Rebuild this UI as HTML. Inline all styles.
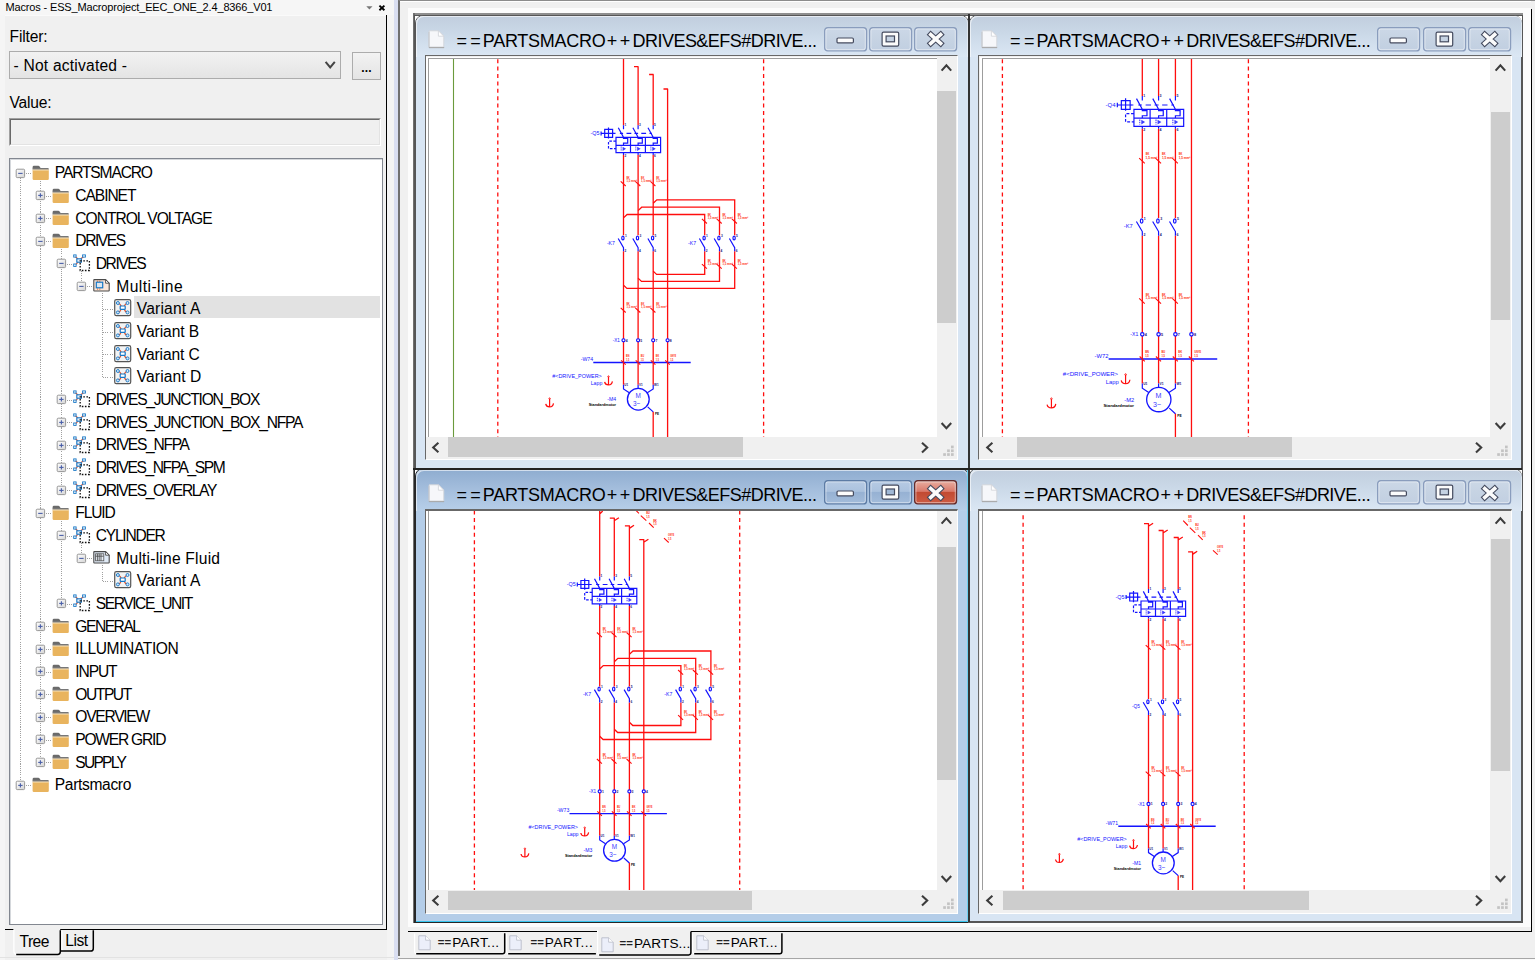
<!DOCTYPE html>
<html><head><meta charset="utf-8"><title>Macros</title>
<style>
html,body{margin:0;padding:0;}
body{width:1535px;height:960px;overflow:hidden;background:#f0f0f0;position:relative;font-family:"Liberation Sans",sans-serif;}
.t{position:absolute;white-space:nowrap;}
.a{position:absolute;}
svg{position:absolute;overflow:visible;}
</style></head><body>

<!-- left panel -->
<div class="a" style="left:0.00px;top:0.00px;width:394.00px;height:15.00px;background:#f6f6f6;"></div>
<div class="a" style="left:0.00px;top:15.00px;width:5.00px;height:945.00px;background:#f5f5f5;"></div>
<div class="a" style="left:5.00px;top:15.00px;width:381.00px;height:1.00px;background:#fafafa;"></div>
<div class="a" style="left:387.30px;top:15.00px;width:6.70px;height:945.00px;background:#f4f4f4;"></div>
<span id="t1" class="t" style="left:5.50px;top:1.69px;font-size:11.00px;line-height:11.00px;color:#000;font-family:'Liberation Sans', sans-serif;letter-spacing:-0.154px;">Macros - ESS_Macroproject_EEC_ONE_2.4_8366_V01</span>
<svg style="left:366px;top:2px" width="24" height="12"><path d="M0.3 4.2h6.2l-3.1 3.3z" fill="#777"/><path d="M13.4 3.6l5 4.6M18.4 3.6l-5 4.6" stroke="#000" stroke-width="1.9" fill="none"/></svg>
<div class="a" style="left:386.00px;top:15.00px;width:1.30px;height:915.00px;background:#000;"></div>
<div class="a" style="left:5.00px;top:929.00px;width:382.00px;height:1.20px;background:#000;"></div>
<div class="a" style="left:394.00px;top:0.00px;width:3.50px;height:960.00px;background:#d9def1;"></div>
<span id="t2" class="t" style="left:9.60px;top:28.59px;font-size:15.60px;line-height:15.60px;color:#000;font-family:'Liberation Sans', sans-serif;letter-spacing:-0.164px;">Filter:</span>
<div class="a" style="left:9.00px;top:50.50px;width:331.60px;height:28.00px;box-sizing:border-box;border:1px solid #acacac;background:linear-gradient(#f2f2f2,#e4e4e4);"></div>
<span id="t3" class="t" style="left:13.50px;top:57.79px;font-size:15.60px;line-height:15.60px;color:#000;font-family:'Liberation Sans', sans-serif;letter-spacing:0.215px;">- Not activated -</span>
<svg style="left:323px;top:60px" width="14" height="11"><path d="M2.6 1.8l4.6 5.6 4.6-5.6" stroke="#444" stroke-width="2" fill="none"/></svg>
<div class="a" style="left:352.00px;top:51.50px;width:29.00px;height:28.00px;box-sizing:border-box;border:1px solid #acacac;background:linear-gradient(#f2f2f2,#e4e4e4);"></div>
<span id="t4" class="t" style="left:361.20px;top:62.04px;font-size:12.00px;line-height:12.00px;color:#000;font-family:'Liberation Sans', sans-serif;font-weight:bold;letter-spacing:0.2px;">...</span>
<span id="t5" class="t" style="left:9.60px;top:95.39px;font-size:15.60px;line-height:15.60px;color:#000;font-family:'Liberation Sans', sans-serif;letter-spacing:-0.212px;">Value:</span>
<div class="a" style="left:9.00px;top:117.50px;width:371.50px;height:28.50px;box-sizing:border-box;border:1px solid #fff;border-top-color:#a0a0a0;border-left-color:#a0a0a0;background:#f0f0f0;"></div>
<div class="a" style="left:10.00px;top:118.50px;width:369.50px;height:26.50px;box-sizing:border-box;border:1px solid #e3e3e3;border-top-color:#696969;border-left-color:#696969;"></div>
<div class="a" style="left:9.00px;top:157.80px;width:373.50px;height:767.00px;box-sizing:border-box;border:1px solid #828790;background:#fff;"></div>
<div class="a" style="left:10.00px;top:158.80px;width:371.50px;height:765.00px;box-sizing:border-box;border:1px solid #d5d8dc;border-right:none;border-bottom:none;"></div>
<!-- tree -->
<div class="a" style="left:134.20px;top:295.90px;width:246.00px;height:22.30px;background:#e2e2e2;"></div>
<div class="a" style="left:19.70px;top:177.80px;width:1px;height:602.01px;background:repeating-linear-gradient(#a0a0a0 0 0.9px,transparent 0.9px 1.85px);"></div>
<div class="a" style="left:40.20px;top:180.80px;width:1px;height:576.34px;background:repeating-linear-gradient(#a0a0a0 0 0.9px,transparent 0.9px 1.85px);"></div>
<div class="a" style="left:60.70px;top:248.80px;width:1px;height:236.34px;background:repeating-linear-gradient(#a0a0a0 0 0.9px,transparent 0.9px 1.85px);"></div>
<div class="a" style="left:81.20px;top:271.47px;width:1px;height:9.67px;background:repeating-linear-gradient(#a0a0a0 0 0.9px,transparent 0.9px 1.85px);"></div>
<div class="a" style="left:101.70px;top:293.13px;width:1px;height:83.67px;background:repeating-linear-gradient(#a0a0a0 0 0.9px,transparent 0.9px 1.85px);"></div>
<div class="a" style="left:60.70px;top:520.81px;width:1px;height:77.67px;background:repeating-linear-gradient(#a0a0a0 0 0.9px,transparent 0.9px 1.85px);"></div>
<div class="a" style="left:81.20px;top:543.47px;width:1px;height:9.67px;background:repeating-linear-gradient(#a0a0a0 0 0.9px,transparent 0.9px 1.85px);"></div>
<div class="a" style="left:101.70px;top:565.14px;width:1px;height:15.67px;background:repeating-linear-gradient(#a0a0a0 0 0.9px,transparent 0.9px 1.85px);"></div>
<div class="a" style="left:25.70px;top:173.00px;height:1px;width:5.70px;background:repeating-linear-gradient(90deg,#a0a0a0 0 0.9px,transparent 0.9px 1.85px);"></div>
<svg style="left:14.80px;top:167.70px" width="11" height="11" viewBox="0 0 11 11"><defs><linearGradient id="eg" x1="0" y1="0" x2="1" y2="1"><stop offset="0" stop-color="#fff"/><stop offset="1" stop-color="#d4d4d4"/></linearGradient></defs><rect x="1.2" y="1.2" width="8.4" height="8.4" rx="1" fill="url(#eg)" stroke="#979797" stroke-width="1"/><path d="M3.2 5.4h4.4" stroke="#4a5fa8" stroke-width="1.1"/></svg>
<svg style="left:31.80px;top:165.00px" width="18" height="16" viewBox="0 0 18 16"><path d="M0.6 4.2V2.2Q0.6 0.8 2 0.8H6.2Q7.2 0.8 7.8 1.8L8.6 3H16.4V4.6z" fill="#6b6b6b"/><path d="M0.6 3.4H7.2" stroke="#555" stroke-width="0"/><rect x="0.6" y="4.3" width="16.2" height="10.6" rx="1.2" fill="#e9b45e"/><rect x="0.6" y="4.3" width="16.2" height="1.2" fill="#f6e3c0"/><rect x="0.6" y="3.6" width="16.2" height="0.9" fill="#8a8a8a"/></svg>
<span id="t6" class="t" style="left:54.80px;top:165.19px;font-size:15.60px;line-height:15.60px;color:#000;font-family:'Liberation Sans', sans-serif;letter-spacing:-1.155px;">PARTSMACRO</span>
<div class="a" style="left:46.20px;top:195.67px;height:1px;width:5.70px;background:repeating-linear-gradient(90deg,#a0a0a0 0 0.9px,transparent 0.9px 1.85px);"></div>
<svg style="left:35.30px;top:190.37px" width="11" height="11" viewBox="0 0 11 11"><defs><linearGradient id="eg" x1="0" y1="0" x2="1" y2="1"><stop offset="0" stop-color="#fff"/><stop offset="1" stop-color="#d4d4d4"/></linearGradient></defs><rect x="1.2" y="1.2" width="8.4" height="8.4" rx="1" fill="url(#eg)" stroke="#979797" stroke-width="1"/><path d="M3.2 5.4h4.4" stroke="#4a5fa8" stroke-width="1.1"/><path d="M5.4 3.2v4.4" stroke="#4a5fa8" stroke-width="1.1"/></svg>
<svg style="left:52.30px;top:187.67px" width="18" height="16" viewBox="0 0 18 16"><path d="M0.6 4.2V2.2Q0.6 0.8 2 0.8H6.2Q7.2 0.8 7.8 1.8L8.6 3H16.4V4.6z" fill="#6b6b6b"/><path d="M0.6 3.4H7.2" stroke="#555" stroke-width="0"/><rect x="0.6" y="4.3" width="16.2" height="10.6" rx="1.2" fill="#e9b45e"/><rect x="0.6" y="4.3" width="16.2" height="1.2" fill="#f6e3c0"/><rect x="0.6" y="3.6" width="16.2" height="0.9" fill="#8a8a8a"/></svg>
<span id="t7" class="t" style="left:75.30px;top:187.86px;font-size:15.60px;line-height:15.60px;color:#000;font-family:'Liberation Sans', sans-serif;letter-spacing:-1.066px;">CABINET</span>
<div class="a" style="left:46.20px;top:218.33px;height:1px;width:5.70px;background:repeating-linear-gradient(90deg,#a0a0a0 0 0.9px,transparent 0.9px 1.85px);"></div>
<svg style="left:35.30px;top:213.03px" width="11" height="11" viewBox="0 0 11 11"><defs><linearGradient id="eg" x1="0" y1="0" x2="1" y2="1"><stop offset="0" stop-color="#fff"/><stop offset="1" stop-color="#d4d4d4"/></linearGradient></defs><rect x="1.2" y="1.2" width="8.4" height="8.4" rx="1" fill="url(#eg)" stroke="#979797" stroke-width="1"/><path d="M3.2 5.4h4.4" stroke="#4a5fa8" stroke-width="1.1"/><path d="M5.4 3.2v4.4" stroke="#4a5fa8" stroke-width="1.1"/></svg>
<svg style="left:52.30px;top:210.33px" width="18" height="16" viewBox="0 0 18 16"><path d="M0.6 4.2V2.2Q0.6 0.8 2 0.8H6.2Q7.2 0.8 7.8 1.8L8.6 3H16.4V4.6z" fill="#6b6b6b"/><path d="M0.6 3.4H7.2" stroke="#555" stroke-width="0"/><rect x="0.6" y="4.3" width="16.2" height="10.6" rx="1.2" fill="#e9b45e"/><rect x="0.6" y="4.3" width="16.2" height="1.2" fill="#f6e3c0"/><rect x="0.6" y="3.6" width="16.2" height="0.9" fill="#8a8a8a"/></svg>
<span id="t8" class="t" style="left:75.30px;top:210.53px;font-size:15.60px;line-height:15.60px;color:#000;font-family:'Liberation Sans', sans-serif;letter-spacing:-1.003px;">CONTROL VOLTAGE</span>
<div class="a" style="left:46.20px;top:241.00px;height:1px;width:5.70px;background:repeating-linear-gradient(90deg,#a0a0a0 0 0.9px,transparent 0.9px 1.85px);"></div>
<svg style="left:35.30px;top:235.70px" width="11" height="11" viewBox="0 0 11 11"><defs><linearGradient id="eg" x1="0" y1="0" x2="1" y2="1"><stop offset="0" stop-color="#fff"/><stop offset="1" stop-color="#d4d4d4"/></linearGradient></defs><rect x="1.2" y="1.2" width="8.4" height="8.4" rx="1" fill="url(#eg)" stroke="#979797" stroke-width="1"/><path d="M3.2 5.4h4.4" stroke="#4a5fa8" stroke-width="1.1"/></svg>
<svg style="left:52.30px;top:233.00px" width="18" height="16" viewBox="0 0 18 16"><path d="M0.6 4.2V2.2Q0.6 0.8 2 0.8H6.2Q7.2 0.8 7.8 1.8L8.6 3H16.4V4.6z" fill="#6b6b6b"/><path d="M0.6 3.4H7.2" stroke="#555" stroke-width="0"/><rect x="0.6" y="4.3" width="16.2" height="10.6" rx="1.2" fill="#e9b45e"/><rect x="0.6" y="4.3" width="16.2" height="1.2" fill="#f6e3c0"/><rect x="0.6" y="3.6" width="16.2" height="0.9" fill="#8a8a8a"/></svg>
<span id="t9" class="t" style="left:75.30px;top:233.20px;font-size:15.60px;line-height:15.60px;color:#000;font-family:'Liberation Sans', sans-serif;letter-spacing:-1.433px;">DRIVES</span>
<div class="a" style="left:66.70px;top:263.67px;height:1px;width:5.70px;background:repeating-linear-gradient(90deg,#a0a0a0 0 0.9px,transparent 0.9px 1.85px);"></div>
<svg style="left:55.80px;top:258.37px" width="11" height="11" viewBox="0 0 11 11"><defs><linearGradient id="eg" x1="0" y1="0" x2="1" y2="1"><stop offset="0" stop-color="#fff"/><stop offset="1" stop-color="#d4d4d4"/></linearGradient></defs><rect x="1.2" y="1.2" width="8.4" height="8.4" rx="1" fill="url(#eg)" stroke="#979797" stroke-width="1"/><path d="M3.2 5.4h4.4" stroke="#4a5fa8" stroke-width="1.1"/></svg>
<svg style="left:73.10px;top:254.17px" width="18" height="18" viewBox="0 0 18 18"><path d="M2 2.3L5 5M11 2.3L7.6 5M2 11.5L5 8.2" stroke="#e0532e" stroke-width="1.1" fill="none"/><rect x="0.7" y="0.9" width="2.4" height="2.2" fill="#fff" stroke="#1476c6" stroke-width="0.9"/><rect x="9.6" y="0.9" width="2.8" height="2.2" fill="#fff" stroke="#1476c6" stroke-width="0.9"/><rect x="0.7" y="10" width="2.4" height="2.4" fill="#fff" stroke="#1476c6" stroke-width="0.9"/><rect x="3.8" y="4.8" width="4.6" height="3.4" fill="#e6eef8" stroke="#1476c6" stroke-width="1.1"/><rect x="7.2" y="6.9" width="9.2" height="9.6" fill="none" stroke="#111" stroke-width="1.3" stroke-dasharray="1.6 1.5"/></svg>
<span id="t10" class="t" style="left:95.80px;top:255.86px;font-size:15.60px;line-height:15.60px;color:#000;font-family:'Liberation Sans', sans-serif;letter-spacing:-1.453px;">DRIVES</span>
<div class="a" style="left:87.20px;top:286.33px;height:1px;width:5.70px;background:repeating-linear-gradient(90deg,#a0a0a0 0 0.9px,transparent 0.9px 1.85px);"></div>
<svg style="left:76.30px;top:281.03px" width="11" height="11" viewBox="0 0 11 11"><defs><linearGradient id="eg" x1="0" y1="0" x2="1" y2="1"><stop offset="0" stop-color="#fff"/><stop offset="1" stop-color="#d4d4d4"/></linearGradient></defs><rect x="1.2" y="1.2" width="8.4" height="8.4" rx="1" fill="url(#eg)" stroke="#979797" stroke-width="1"/><path d="M3.2 5.4h4.4" stroke="#4a5fa8" stroke-width="1.1"/></svg>
<svg style="left:93.30px;top:278.74px" width="18" height="14" viewBox="0 0 18 14"><path d="M1.4 0.6H12.6L16.2 4.2V11.4Q16.2 12 15.6 12H1.4Q0.8 12 0.8 11.4V1.2Q0.8 0.6 1.4 0.6z" fill="#fbe6d9" stroke="#4a4a4a" stroke-width="1.1"/><path d="M12.6 0.6V4.2H16.2z" fill="#fff" stroke="#4a4a4a" stroke-width="0.9"/><path d="M4.6 1.6v1.4M6.8 1.6v1.4M4.6 9.4v1.4M6.8 9.4v1.4" stroke="#f26b21" stroke-width="0.9"/><rect x="3.3" y="3.2" width="6.4" height="5.6" fill="#dbe6ef" stroke="#1476c6" stroke-width="1.2"/></svg>
<span id="t11" class="t" style="left:116.30px;top:278.53px;font-size:15.60px;line-height:15.60px;color:#000;font-family:'Liberation Sans', sans-serif;letter-spacing:0.434px;">Multi-line</span>
<div class="a" style="left:103.20px;top:309.00px;height:1px;width:10.20px;background:repeating-linear-gradient(90deg,#a0a0a0 0 0.9px,transparent 0.9px 1.85px);"></div>
<svg style="left:114.00px;top:299.40px" width="18" height="18" viewBox="0 0 18 18"><rect x="0.7" y="0.7" width="16" height="16" rx="1.6" fill="#f3f3f3" stroke="#555" stroke-width="1.2"/><path d="M4 4Q6.5 5 7.2 7.2M13.4 4Q11 5 10.2 7.2M4 13.4Q6.5 12.6 7.2 10.2M13.4 13.4Q11 12.6 10.2 10.2" stroke="#e0532e" stroke-width="1.2" fill="none"/><circle cx="3.9" cy="4" r="1.5" fill="#cfe6f8" stroke="#1476c6" stroke-width="0.9"/><circle cx="13.5" cy="4" r="1.5" fill="#cfe6f8" stroke="#1476c6" stroke-width="0.9"/><circle cx="3.9" cy="13.4" r="1.5" fill="#cfe6f8" stroke="#1476c6" stroke-width="0.9"/><circle cx="13.5" cy="13.4" r="1.5" fill="#cfe6f8" stroke="#1476c6" stroke-width="0.9"/><rect x="6.2" y="7" width="5" height="3.4" rx="0.6" fill="#fff" stroke="#1476c6" stroke-width="1.2"/></svg>
<span id="t12" class="t" style="left:136.80px;top:301.20px;font-size:15.60px;line-height:15.60px;color:#000;font-family:'Liberation Sans', sans-serif;letter-spacing:0.184px;">Variant A</span>
<div class="a" style="left:103.20px;top:331.67px;height:1px;width:10.20px;background:repeating-linear-gradient(90deg,#a0a0a0 0 0.9px,transparent 0.9px 1.85px);"></div>
<svg style="left:114.00px;top:322.07px" width="18" height="18" viewBox="0 0 18 18"><rect x="0.7" y="0.7" width="16" height="16" rx="1.6" fill="#f3f3f3" stroke="#555" stroke-width="1.2"/><path d="M4 4Q6.5 5 7.2 7.2M13.4 4Q11 5 10.2 7.2M4 13.4Q6.5 12.6 7.2 10.2M13.4 13.4Q11 12.6 10.2 10.2" stroke="#e0532e" stroke-width="1.2" fill="none"/><circle cx="3.9" cy="4" r="1.5" fill="#cfe6f8" stroke="#1476c6" stroke-width="0.9"/><circle cx="13.5" cy="4" r="1.5" fill="#cfe6f8" stroke="#1476c6" stroke-width="0.9"/><circle cx="3.9" cy="13.4" r="1.5" fill="#cfe6f8" stroke="#1476c6" stroke-width="0.9"/><circle cx="13.5" cy="13.4" r="1.5" fill="#cfe6f8" stroke="#1476c6" stroke-width="0.9"/><rect x="6.2" y="7" width="5" height="3.4" rx="0.6" fill="#fff" stroke="#1476c6" stroke-width="1.2"/></svg>
<span id="t13" class="t" style="left:136.80px;top:323.86px;font-size:15.60px;line-height:15.60px;color:#000;font-family:'Liberation Sans', sans-serif;letter-spacing:-0.073px;">Variant B</span>
<div class="a" style="left:103.20px;top:354.34px;height:1px;width:10.20px;background:repeating-linear-gradient(90deg,#a0a0a0 0 0.9px,transparent 0.9px 1.85px);"></div>
<svg style="left:114.00px;top:344.74px" width="18" height="18" viewBox="0 0 18 18"><rect x="0.7" y="0.7" width="16" height="16" rx="1.6" fill="#f3f3f3" stroke="#555" stroke-width="1.2"/><path d="M4 4Q6.5 5 7.2 7.2M13.4 4Q11 5 10.2 7.2M4 13.4Q6.5 12.6 7.2 10.2M13.4 13.4Q11 12.6 10.2 10.2" stroke="#e0532e" stroke-width="1.2" fill="none"/><circle cx="3.9" cy="4" r="1.5" fill="#cfe6f8" stroke="#1476c6" stroke-width="0.9"/><circle cx="13.5" cy="4" r="1.5" fill="#cfe6f8" stroke="#1476c6" stroke-width="0.9"/><circle cx="3.9" cy="13.4" r="1.5" fill="#cfe6f8" stroke="#1476c6" stroke-width="0.9"/><circle cx="13.5" cy="13.4" r="1.5" fill="#cfe6f8" stroke="#1476c6" stroke-width="0.9"/><rect x="6.2" y="7" width="5" height="3.4" rx="0.6" fill="#fff" stroke="#1476c6" stroke-width="1.2"/></svg>
<span id="t14" class="t" style="left:136.80px;top:346.53px;font-size:15.60px;line-height:15.60px;color:#000;font-family:'Liberation Sans', sans-serif;letter-spacing:-0.120px;">Variant C</span>
<div class="a" style="left:103.20px;top:377.00px;height:1px;width:10.20px;background:repeating-linear-gradient(90deg,#a0a0a0 0 0.9px,transparent 0.9px 1.85px);"></div>
<svg style="left:114.00px;top:367.40px" width="18" height="18" viewBox="0 0 18 18"><rect x="0.7" y="0.7" width="16" height="16" rx="1.6" fill="#f3f3f3" stroke="#555" stroke-width="1.2"/><path d="M4 4Q6.5 5 7.2 7.2M13.4 4Q11 5 10.2 7.2M4 13.4Q6.5 12.6 7.2 10.2M13.4 13.4Q11 12.6 10.2 10.2" stroke="#e0532e" stroke-width="1.2" fill="none"/><circle cx="3.9" cy="4" r="1.5" fill="#cfe6f8" stroke="#1476c6" stroke-width="0.9"/><circle cx="13.5" cy="4" r="1.5" fill="#cfe6f8" stroke="#1476c6" stroke-width="0.9"/><circle cx="3.9" cy="13.4" r="1.5" fill="#cfe6f8" stroke="#1476c6" stroke-width="0.9"/><circle cx="13.5" cy="13.4" r="1.5" fill="#cfe6f8" stroke="#1476c6" stroke-width="0.9"/><rect x="6.2" y="7" width="5" height="3.4" rx="0.6" fill="#fff" stroke="#1476c6" stroke-width="1.2"/></svg>
<span id="t15" class="t" style="left:136.80px;top:369.20px;font-size:15.60px;line-height:15.60px;color:#000;font-family:'Liberation Sans', sans-serif;letter-spacing:0.080px;">Variant D</span>
<div class="a" style="left:66.70px;top:399.67px;height:1px;width:5.70px;background:repeating-linear-gradient(90deg,#a0a0a0 0 0.9px,transparent 0.9px 1.85px);"></div>
<svg style="left:55.80px;top:394.37px" width="11" height="11" viewBox="0 0 11 11"><defs><linearGradient id="eg" x1="0" y1="0" x2="1" y2="1"><stop offset="0" stop-color="#fff"/><stop offset="1" stop-color="#d4d4d4"/></linearGradient></defs><rect x="1.2" y="1.2" width="8.4" height="8.4" rx="1" fill="url(#eg)" stroke="#979797" stroke-width="1"/><path d="M3.2 5.4h4.4" stroke="#4a5fa8" stroke-width="1.1"/><path d="M5.4 3.2v4.4" stroke="#4a5fa8" stroke-width="1.1"/></svg>
<svg style="left:73.10px;top:390.17px" width="18" height="18" viewBox="0 0 18 18"><path d="M2 2.3L5 5M11 2.3L7.6 5M2 11.5L5 8.2" stroke="#e0532e" stroke-width="1.1" fill="none"/><rect x="0.7" y="0.9" width="2.4" height="2.2" fill="#fff" stroke="#1476c6" stroke-width="0.9"/><rect x="9.6" y="0.9" width="2.8" height="2.2" fill="#fff" stroke="#1476c6" stroke-width="0.9"/><rect x="0.7" y="10" width="2.4" height="2.4" fill="#fff" stroke="#1476c6" stroke-width="0.9"/><rect x="3.8" y="4.8" width="4.6" height="3.4" fill="#e6eef8" stroke="#1476c6" stroke-width="1.1"/><rect x="7.2" y="6.9" width="9.2" height="9.6" fill="none" stroke="#111" stroke-width="1.3" stroke-dasharray="1.6 1.5"/></svg>
<span id="t16" class="t" style="left:95.80px;top:391.86px;font-size:15.60px;line-height:15.60px;color:#000;font-family:'Liberation Sans', sans-serif;letter-spacing:-1.254px;">DRIVES_JUNCTION_BOX</span>
<div class="a" style="left:66.70px;top:422.34px;height:1px;width:5.70px;background:repeating-linear-gradient(90deg,#a0a0a0 0 0.9px,transparent 0.9px 1.85px);"></div>
<svg style="left:55.80px;top:417.04px" width="11" height="11" viewBox="0 0 11 11"><defs><linearGradient id="eg" x1="0" y1="0" x2="1" y2="1"><stop offset="0" stop-color="#fff"/><stop offset="1" stop-color="#d4d4d4"/></linearGradient></defs><rect x="1.2" y="1.2" width="8.4" height="8.4" rx="1" fill="url(#eg)" stroke="#979797" stroke-width="1"/><path d="M3.2 5.4h4.4" stroke="#4a5fa8" stroke-width="1.1"/><path d="M5.4 3.2v4.4" stroke="#4a5fa8" stroke-width="1.1"/></svg>
<svg style="left:73.10px;top:412.84px" width="18" height="18" viewBox="0 0 18 18"><path d="M2 2.3L5 5M11 2.3L7.6 5M2 11.5L5 8.2" stroke="#e0532e" stroke-width="1.1" fill="none"/><rect x="0.7" y="0.9" width="2.4" height="2.2" fill="#fff" stroke="#1476c6" stroke-width="0.9"/><rect x="9.6" y="0.9" width="2.8" height="2.2" fill="#fff" stroke="#1476c6" stroke-width="0.9"/><rect x="0.7" y="10" width="2.4" height="2.4" fill="#fff" stroke="#1476c6" stroke-width="0.9"/><rect x="3.8" y="4.8" width="4.6" height="3.4" fill="#e6eef8" stroke="#1476c6" stroke-width="1.1"/><rect x="7.2" y="6.9" width="9.2" height="9.6" fill="none" stroke="#111" stroke-width="1.3" stroke-dasharray="1.6 1.5"/></svg>
<span id="t17" class="t" style="left:95.80px;top:414.53px;font-size:15.60px;line-height:15.60px;color:#000;font-family:'Liberation Sans', sans-serif;letter-spacing:-1.247px;">DRIVES_JUNCTION_BOX_NFPA</span>
<div class="a" style="left:66.70px;top:445.00px;height:1px;width:5.70px;background:repeating-linear-gradient(90deg,#a0a0a0 0 0.9px,transparent 0.9px 1.85px);"></div>
<svg style="left:55.80px;top:439.70px" width="11" height="11" viewBox="0 0 11 11"><defs><linearGradient id="eg" x1="0" y1="0" x2="1" y2="1"><stop offset="0" stop-color="#fff"/><stop offset="1" stop-color="#d4d4d4"/></linearGradient></defs><rect x="1.2" y="1.2" width="8.4" height="8.4" rx="1" fill="url(#eg)" stroke="#979797" stroke-width="1"/><path d="M3.2 5.4h4.4" stroke="#4a5fa8" stroke-width="1.1"/><path d="M5.4 3.2v4.4" stroke="#4a5fa8" stroke-width="1.1"/></svg>
<svg style="left:73.10px;top:435.50px" width="18" height="18" viewBox="0 0 18 18"><path d="M2 2.3L5 5M11 2.3L7.6 5M2 11.5L5 8.2" stroke="#e0532e" stroke-width="1.1" fill="none"/><rect x="0.7" y="0.9" width="2.4" height="2.2" fill="#fff" stroke="#1476c6" stroke-width="0.9"/><rect x="9.6" y="0.9" width="2.8" height="2.2" fill="#fff" stroke="#1476c6" stroke-width="0.9"/><rect x="0.7" y="10" width="2.4" height="2.4" fill="#fff" stroke="#1476c6" stroke-width="0.9"/><rect x="3.8" y="4.8" width="4.6" height="3.4" fill="#e6eef8" stroke="#1476c6" stroke-width="1.1"/><rect x="7.2" y="6.9" width="9.2" height="9.6" fill="none" stroke="#111" stroke-width="1.3" stroke-dasharray="1.6 1.5"/></svg>
<span id="t18" class="t" style="left:95.80px;top:437.20px;font-size:15.60px;line-height:15.60px;color:#000;font-family:'Liberation Sans', sans-serif;letter-spacing:-1.297px;">DRIVES_NFPA</span>
<div class="a" style="left:66.70px;top:467.67px;height:1px;width:5.70px;background:repeating-linear-gradient(90deg,#a0a0a0 0 0.9px,transparent 0.9px 1.85px);"></div>
<svg style="left:55.80px;top:462.37px" width="11" height="11" viewBox="0 0 11 11"><defs><linearGradient id="eg" x1="0" y1="0" x2="1" y2="1"><stop offset="0" stop-color="#fff"/><stop offset="1" stop-color="#d4d4d4"/></linearGradient></defs><rect x="1.2" y="1.2" width="8.4" height="8.4" rx="1" fill="url(#eg)" stroke="#979797" stroke-width="1"/><path d="M3.2 5.4h4.4" stroke="#4a5fa8" stroke-width="1.1"/><path d="M5.4 3.2v4.4" stroke="#4a5fa8" stroke-width="1.1"/></svg>
<svg style="left:73.10px;top:458.17px" width="18" height="18" viewBox="0 0 18 18"><path d="M2 2.3L5 5M11 2.3L7.6 5M2 11.5L5 8.2" stroke="#e0532e" stroke-width="1.1" fill="none"/><rect x="0.7" y="0.9" width="2.4" height="2.2" fill="#fff" stroke="#1476c6" stroke-width="0.9"/><rect x="9.6" y="0.9" width="2.8" height="2.2" fill="#fff" stroke="#1476c6" stroke-width="0.9"/><rect x="0.7" y="10" width="2.4" height="2.4" fill="#fff" stroke="#1476c6" stroke-width="0.9"/><rect x="3.8" y="4.8" width="4.6" height="3.4" fill="#e6eef8" stroke="#1476c6" stroke-width="1.1"/><rect x="7.2" y="6.9" width="9.2" height="9.6" fill="none" stroke="#111" stroke-width="1.3" stroke-dasharray="1.6 1.5"/></svg>
<span id="t19" class="t" style="left:95.80px;top:459.87px;font-size:15.60px;line-height:15.60px;color:#000;font-family:'Liberation Sans', sans-serif;letter-spacing:-1.402px;">DRIVES_NFPA_SPM</span>
<div class="a" style="left:66.70px;top:490.34px;height:1px;width:5.70px;background:repeating-linear-gradient(90deg,#a0a0a0 0 0.9px,transparent 0.9px 1.85px);"></div>
<svg style="left:55.80px;top:485.04px" width="11" height="11" viewBox="0 0 11 11"><defs><linearGradient id="eg" x1="0" y1="0" x2="1" y2="1"><stop offset="0" stop-color="#fff"/><stop offset="1" stop-color="#d4d4d4"/></linearGradient></defs><rect x="1.2" y="1.2" width="8.4" height="8.4" rx="1" fill="url(#eg)" stroke="#979797" stroke-width="1"/><path d="M3.2 5.4h4.4" stroke="#4a5fa8" stroke-width="1.1"/><path d="M5.4 3.2v4.4" stroke="#4a5fa8" stroke-width="1.1"/></svg>
<svg style="left:73.10px;top:480.84px" width="18" height="18" viewBox="0 0 18 18"><path d="M2 2.3L5 5M11 2.3L7.6 5M2 11.5L5 8.2" stroke="#e0532e" stroke-width="1.1" fill="none"/><rect x="0.7" y="0.9" width="2.4" height="2.2" fill="#fff" stroke="#1476c6" stroke-width="0.9"/><rect x="9.6" y="0.9" width="2.8" height="2.2" fill="#fff" stroke="#1476c6" stroke-width="0.9"/><rect x="0.7" y="10" width="2.4" height="2.4" fill="#fff" stroke="#1476c6" stroke-width="0.9"/><rect x="3.8" y="4.8" width="4.6" height="3.4" fill="#e6eef8" stroke="#1476c6" stroke-width="1.1"/><rect x="7.2" y="6.9" width="9.2" height="9.6" fill="none" stroke="#111" stroke-width="1.3" stroke-dasharray="1.6 1.5"/></svg>
<span id="t20" class="t" style="left:95.80px;top:482.53px;font-size:15.60px;line-height:15.60px;color:#000;font-family:'Liberation Sans', sans-serif;letter-spacing:-1.358px;">DRIVES_OVERLAY</span>
<div class="a" style="left:46.20px;top:513.01px;height:1px;width:5.70px;background:repeating-linear-gradient(90deg,#a0a0a0 0 0.9px,transparent 0.9px 1.85px);"></div>
<svg style="left:35.30px;top:507.71px" width="11" height="11" viewBox="0 0 11 11"><defs><linearGradient id="eg" x1="0" y1="0" x2="1" y2="1"><stop offset="0" stop-color="#fff"/><stop offset="1" stop-color="#d4d4d4"/></linearGradient></defs><rect x="1.2" y="1.2" width="8.4" height="8.4" rx="1" fill="url(#eg)" stroke="#979797" stroke-width="1"/><path d="M3.2 5.4h4.4" stroke="#4a5fa8" stroke-width="1.1"/></svg>
<svg style="left:52.30px;top:505.01px" width="18" height="16" viewBox="0 0 18 16"><path d="M0.6 4.2V2.2Q0.6 0.8 2 0.8H6.2Q7.2 0.8 7.8 1.8L8.6 3H16.4V4.6z" fill="#6b6b6b"/><path d="M0.6 3.4H7.2" stroke="#555" stroke-width="0"/><rect x="0.6" y="4.3" width="16.2" height="10.6" rx="1.2" fill="#e9b45e"/><rect x="0.6" y="4.3" width="16.2" height="1.2" fill="#f6e3c0"/><rect x="0.6" y="3.6" width="16.2" height="0.9" fill="#8a8a8a"/></svg>
<span id="t21" class="t" style="left:75.30px;top:505.20px;font-size:15.60px;line-height:15.60px;color:#000;font-family:'Liberation Sans', sans-serif;letter-spacing:-1.141px;">FLUID</span>
<div class="a" style="left:66.70px;top:535.67px;height:1px;width:5.70px;background:repeating-linear-gradient(90deg,#a0a0a0 0 0.9px,transparent 0.9px 1.85px);"></div>
<svg style="left:55.80px;top:530.37px" width="11" height="11" viewBox="0 0 11 11"><defs><linearGradient id="eg" x1="0" y1="0" x2="1" y2="1"><stop offset="0" stop-color="#fff"/><stop offset="1" stop-color="#d4d4d4"/></linearGradient></defs><rect x="1.2" y="1.2" width="8.4" height="8.4" rx="1" fill="url(#eg)" stroke="#979797" stroke-width="1"/><path d="M3.2 5.4h4.4" stroke="#4a5fa8" stroke-width="1.1"/></svg>
<svg style="left:73.10px;top:526.17px" width="18" height="18" viewBox="0 0 18 18"><path d="M2 2.3L5 5M11 2.3L7.6 5M2 11.5L5 8.2" stroke="#e0532e" stroke-width="1.1" fill="none"/><rect x="0.7" y="0.9" width="2.4" height="2.2" fill="#fff" stroke="#1476c6" stroke-width="0.9"/><rect x="9.6" y="0.9" width="2.8" height="2.2" fill="#fff" stroke="#1476c6" stroke-width="0.9"/><rect x="0.7" y="10" width="2.4" height="2.4" fill="#fff" stroke="#1476c6" stroke-width="0.9"/><rect x="3.8" y="4.8" width="4.6" height="3.4" fill="#e6eef8" stroke="#1476c6" stroke-width="1.1"/><rect x="7.2" y="6.9" width="9.2" height="9.6" fill="none" stroke="#111" stroke-width="1.3" stroke-dasharray="1.6 1.5"/></svg>
<span id="t22" class="t" style="left:95.80px;top:527.87px;font-size:15.60px;line-height:15.60px;color:#000;font-family:'Liberation Sans', sans-serif;letter-spacing:-1.266px;">CYLINDER</span>
<div class="a" style="left:87.20px;top:558.34px;height:1px;width:5.70px;background:repeating-linear-gradient(90deg,#a0a0a0 0 0.9px,transparent 0.9px 1.85px);"></div>
<svg style="left:76.30px;top:553.04px" width="11" height="11" viewBox="0 0 11 11"><defs><linearGradient id="eg" x1="0" y1="0" x2="1" y2="1"><stop offset="0" stop-color="#fff"/><stop offset="1" stop-color="#d4d4d4"/></linearGradient></defs><rect x="1.2" y="1.2" width="8.4" height="8.4" rx="1" fill="url(#eg)" stroke="#979797" stroke-width="1"/><path d="M3.2 5.4h4.4" stroke="#4a5fa8" stroke-width="1.1"/></svg>
<svg style="left:93.30px;top:550.74px" width="18" height="14" viewBox="0 0 18 14"><path d="M1.4 0.6H12.6L16.2 4.2V11.4Q16.2 12 15.6 12H1.4Q0.8 12 0.8 11.4V1.2Q0.8 0.6 1.4 0.6z" fill="#dfe9f5" stroke="#4a4a4a" stroke-width="1.1"/><path d="M12.6 0.6V4.2H16.2z" fill="#fff" stroke="#4a4a4a" stroke-width="0.9"/><rect x="2.6" y="2.8" width="8.2" height="7" fill="#e8eef6" stroke="#555" stroke-width="0.8"/><path d="M4.4 2.8v7M6.2 2.8v7M8 2.8v7M2.6 5.2h8" stroke="#444" stroke-width="0.8"/></svg>
<span id="t23" class="t" style="left:116.30px;top:550.53px;font-size:15.60px;line-height:15.60px;color:#000;font-family:'Liberation Sans', sans-serif;letter-spacing:0.211px;">Multi-line Fluid</span>
<div class="a" style="left:103.20px;top:581.01px;height:1px;width:10.20px;background:repeating-linear-gradient(90deg,#a0a0a0 0 0.9px,transparent 0.9px 1.85px);"></div>
<svg style="left:114.00px;top:571.41px" width="18" height="18" viewBox="0 0 18 18"><rect x="0.7" y="0.7" width="16" height="16" rx="1.6" fill="#f3f3f3" stroke="#555" stroke-width="1.2"/><path d="M4 4Q6.5 5 7.2 7.2M13.4 4Q11 5 10.2 7.2M4 13.4Q6.5 12.6 7.2 10.2M13.4 13.4Q11 12.6 10.2 10.2" stroke="#e0532e" stroke-width="1.2" fill="none"/><circle cx="3.9" cy="4" r="1.5" fill="#cfe6f8" stroke="#1476c6" stroke-width="0.9"/><circle cx="13.5" cy="4" r="1.5" fill="#cfe6f8" stroke="#1476c6" stroke-width="0.9"/><circle cx="3.9" cy="13.4" r="1.5" fill="#cfe6f8" stroke="#1476c6" stroke-width="0.9"/><circle cx="13.5" cy="13.4" r="1.5" fill="#cfe6f8" stroke="#1476c6" stroke-width="0.9"/><rect x="6.2" y="7" width="5" height="3.4" rx="0.6" fill="#fff" stroke="#1476c6" stroke-width="1.2"/></svg>
<span id="t24" class="t" style="left:136.80px;top:573.20px;font-size:15.60px;line-height:15.60px;color:#000;font-family:'Liberation Sans', sans-serif;letter-spacing:0.184px;">Variant A</span>
<div class="a" style="left:66.70px;top:603.67px;height:1px;width:5.70px;background:repeating-linear-gradient(90deg,#a0a0a0 0 0.9px,transparent 0.9px 1.85px);"></div>
<svg style="left:55.80px;top:598.37px" width="11" height="11" viewBox="0 0 11 11"><defs><linearGradient id="eg" x1="0" y1="0" x2="1" y2="1"><stop offset="0" stop-color="#fff"/><stop offset="1" stop-color="#d4d4d4"/></linearGradient></defs><rect x="1.2" y="1.2" width="8.4" height="8.4" rx="1" fill="url(#eg)" stroke="#979797" stroke-width="1"/><path d="M3.2 5.4h4.4" stroke="#4a5fa8" stroke-width="1.1"/><path d="M5.4 3.2v4.4" stroke="#4a5fa8" stroke-width="1.1"/></svg>
<svg style="left:73.10px;top:594.17px" width="18" height="18" viewBox="0 0 18 18"><path d="M2 2.3L5 5M11 2.3L7.6 5M2 11.5L5 8.2" stroke="#e0532e" stroke-width="1.1" fill="none"/><rect x="0.7" y="0.9" width="2.4" height="2.2" fill="#fff" stroke="#1476c6" stroke-width="0.9"/><rect x="9.6" y="0.9" width="2.8" height="2.2" fill="#fff" stroke="#1476c6" stroke-width="0.9"/><rect x="0.7" y="10" width="2.4" height="2.4" fill="#fff" stroke="#1476c6" stroke-width="0.9"/><rect x="3.8" y="4.8" width="4.6" height="3.4" fill="#e6eef8" stroke="#1476c6" stroke-width="1.1"/><rect x="7.2" y="6.9" width="9.2" height="9.6" fill="none" stroke="#111" stroke-width="1.3" stroke-dasharray="1.6 1.5"/></svg>
<span id="t25" class="t" style="left:95.80px;top:595.87px;font-size:15.60px;line-height:15.60px;color:#000;font-family:'Liberation Sans', sans-serif;letter-spacing:-1.439px;">SERVICE_UNIT</span>
<div class="a" style="left:46.20px;top:626.34px;height:1px;width:5.70px;background:repeating-linear-gradient(90deg,#a0a0a0 0 0.9px,transparent 0.9px 1.85px);"></div>
<svg style="left:35.30px;top:621.04px" width="11" height="11" viewBox="0 0 11 11"><defs><linearGradient id="eg" x1="0" y1="0" x2="1" y2="1"><stop offset="0" stop-color="#fff"/><stop offset="1" stop-color="#d4d4d4"/></linearGradient></defs><rect x="1.2" y="1.2" width="8.4" height="8.4" rx="1" fill="url(#eg)" stroke="#979797" stroke-width="1"/><path d="M3.2 5.4h4.4" stroke="#4a5fa8" stroke-width="1.1"/><path d="M5.4 3.2v4.4" stroke="#4a5fa8" stroke-width="1.1"/></svg>
<svg style="left:52.30px;top:618.34px" width="18" height="16" viewBox="0 0 18 16"><path d="M0.6 4.2V2.2Q0.6 0.8 2 0.8H6.2Q7.2 0.8 7.8 1.8L8.6 3H16.4V4.6z" fill="#6b6b6b"/><path d="M0.6 3.4H7.2" stroke="#555" stroke-width="0"/><rect x="0.6" y="4.3" width="16.2" height="10.6" rx="1.2" fill="#e9b45e"/><rect x="0.6" y="4.3" width="16.2" height="1.2" fill="#f6e3c0"/><rect x="0.6" y="3.6" width="16.2" height="0.9" fill="#8a8a8a"/></svg>
<span id="t26" class="t" style="left:75.30px;top:618.53px;font-size:15.60px;line-height:15.60px;color:#000;font-family:'Liberation Sans', sans-serif;letter-spacing:-1.472px;">GENERAL</span>
<div class="a" style="left:46.20px;top:649.01px;height:1px;width:5.70px;background:repeating-linear-gradient(90deg,#a0a0a0 0 0.9px,transparent 0.9px 1.85px);"></div>
<svg style="left:35.30px;top:643.71px" width="11" height="11" viewBox="0 0 11 11"><defs><linearGradient id="eg" x1="0" y1="0" x2="1" y2="1"><stop offset="0" stop-color="#fff"/><stop offset="1" stop-color="#d4d4d4"/></linearGradient></defs><rect x="1.2" y="1.2" width="8.4" height="8.4" rx="1" fill="url(#eg)" stroke="#979797" stroke-width="1"/><path d="M3.2 5.4h4.4" stroke="#4a5fa8" stroke-width="1.1"/><path d="M5.4 3.2v4.4" stroke="#4a5fa8" stroke-width="1.1"/></svg>
<svg style="left:52.30px;top:641.01px" width="18" height="16" viewBox="0 0 18 16"><path d="M0.6 4.2V2.2Q0.6 0.8 2 0.8H6.2Q7.2 0.8 7.8 1.8L8.6 3H16.4V4.6z" fill="#6b6b6b"/><path d="M0.6 3.4H7.2" stroke="#555" stroke-width="0"/><rect x="0.6" y="4.3" width="16.2" height="10.6" rx="1.2" fill="#e9b45e"/><rect x="0.6" y="4.3" width="16.2" height="1.2" fill="#f6e3c0"/><rect x="0.6" y="3.6" width="16.2" height="0.9" fill="#8a8a8a"/></svg>
<span id="t27" class="t" style="left:75.30px;top:641.20px;font-size:15.60px;line-height:15.60px;color:#000;font-family:'Liberation Sans', sans-serif;letter-spacing:-0.411px;">ILLUMINATION</span>
<div class="a" style="left:46.20px;top:671.67px;height:1px;width:5.70px;background:repeating-linear-gradient(90deg,#a0a0a0 0 0.9px,transparent 0.9px 1.85px);"></div>
<svg style="left:35.30px;top:666.37px" width="11" height="11" viewBox="0 0 11 11"><defs><linearGradient id="eg" x1="0" y1="0" x2="1" y2="1"><stop offset="0" stop-color="#fff"/><stop offset="1" stop-color="#d4d4d4"/></linearGradient></defs><rect x="1.2" y="1.2" width="8.4" height="8.4" rx="1" fill="url(#eg)" stroke="#979797" stroke-width="1"/><path d="M3.2 5.4h4.4" stroke="#4a5fa8" stroke-width="1.1"/><path d="M5.4 3.2v4.4" stroke="#4a5fa8" stroke-width="1.1"/></svg>
<svg style="left:52.30px;top:663.67px" width="18" height="16" viewBox="0 0 18 16"><path d="M0.6 4.2V2.2Q0.6 0.8 2 0.8H6.2Q7.2 0.8 7.8 1.8L8.6 3H16.4V4.6z" fill="#6b6b6b"/><path d="M0.6 3.4H7.2" stroke="#555" stroke-width="0"/><rect x="0.6" y="4.3" width="16.2" height="10.6" rx="1.2" fill="#e9b45e"/><rect x="0.6" y="4.3" width="16.2" height="1.2" fill="#f6e3c0"/><rect x="0.6" y="3.6" width="16.2" height="0.9" fill="#8a8a8a"/></svg>
<span id="t28" class="t" style="left:75.30px;top:663.87px;font-size:15.60px;line-height:15.60px;color:#000;font-family:'Liberation Sans', sans-serif;letter-spacing:-1.120px;">INPUT</span>
<div class="a" style="left:46.20px;top:694.34px;height:1px;width:5.70px;background:repeating-linear-gradient(90deg,#a0a0a0 0 0.9px,transparent 0.9px 1.85px);"></div>
<svg style="left:35.30px;top:689.04px" width="11" height="11" viewBox="0 0 11 11"><defs><linearGradient id="eg" x1="0" y1="0" x2="1" y2="1"><stop offset="0" stop-color="#fff"/><stop offset="1" stop-color="#d4d4d4"/></linearGradient></defs><rect x="1.2" y="1.2" width="8.4" height="8.4" rx="1" fill="url(#eg)" stroke="#979797" stroke-width="1"/><path d="M3.2 5.4h4.4" stroke="#4a5fa8" stroke-width="1.1"/><path d="M5.4 3.2v4.4" stroke="#4a5fa8" stroke-width="1.1"/></svg>
<svg style="left:52.30px;top:686.34px" width="18" height="16" viewBox="0 0 18 16"><path d="M0.6 4.2V2.2Q0.6 0.8 2 0.8H6.2Q7.2 0.8 7.8 1.8L8.6 3H16.4V4.6z" fill="#6b6b6b"/><path d="M0.6 3.4H7.2" stroke="#555" stroke-width="0"/><rect x="0.6" y="4.3" width="16.2" height="10.6" rx="1.2" fill="#e9b45e"/><rect x="0.6" y="4.3" width="16.2" height="1.2" fill="#f6e3c0"/><rect x="0.6" y="3.6" width="16.2" height="0.9" fill="#8a8a8a"/></svg>
<span id="t29" class="t" style="left:75.30px;top:686.54px;font-size:15.60px;line-height:15.60px;color:#000;font-family:'Liberation Sans', sans-serif;letter-spacing:-1.442px;">OUTPUT</span>
<div class="a" style="left:46.20px;top:717.01px;height:1px;width:5.70px;background:repeating-linear-gradient(90deg,#a0a0a0 0 0.9px,transparent 0.9px 1.85px);"></div>
<svg style="left:35.30px;top:711.71px" width="11" height="11" viewBox="0 0 11 11"><defs><linearGradient id="eg" x1="0" y1="0" x2="1" y2="1"><stop offset="0" stop-color="#fff"/><stop offset="1" stop-color="#d4d4d4"/></linearGradient></defs><rect x="1.2" y="1.2" width="8.4" height="8.4" rx="1" fill="url(#eg)" stroke="#979797" stroke-width="1"/><path d="M3.2 5.4h4.4" stroke="#4a5fa8" stroke-width="1.1"/><path d="M5.4 3.2v4.4" stroke="#4a5fa8" stroke-width="1.1"/></svg>
<svg style="left:52.30px;top:709.01px" width="18" height="16" viewBox="0 0 18 16"><path d="M0.6 4.2V2.2Q0.6 0.8 2 0.8H6.2Q7.2 0.8 7.8 1.8L8.6 3H16.4V4.6z" fill="#6b6b6b"/><path d="M0.6 3.4H7.2" stroke="#555" stroke-width="0"/><rect x="0.6" y="4.3" width="16.2" height="10.6" rx="1.2" fill="#e9b45e"/><rect x="0.6" y="4.3" width="16.2" height="1.2" fill="#f6e3c0"/><rect x="0.6" y="3.6" width="16.2" height="0.9" fill="#8a8a8a"/></svg>
<span id="t30" class="t" style="left:75.30px;top:709.20px;font-size:15.60px;line-height:15.60px;color:#000;font-family:'Liberation Sans', sans-serif;letter-spacing:-1.267px;">OVERVIEW</span>
<div class="a" style="left:46.20px;top:739.68px;height:1px;width:5.70px;background:repeating-linear-gradient(90deg,#a0a0a0 0 0.9px,transparent 0.9px 1.85px);"></div>
<svg style="left:35.30px;top:734.38px" width="11" height="11" viewBox="0 0 11 11"><defs><linearGradient id="eg" x1="0" y1="0" x2="1" y2="1"><stop offset="0" stop-color="#fff"/><stop offset="1" stop-color="#d4d4d4"/></linearGradient></defs><rect x="1.2" y="1.2" width="8.4" height="8.4" rx="1" fill="url(#eg)" stroke="#979797" stroke-width="1"/><path d="M3.2 5.4h4.4" stroke="#4a5fa8" stroke-width="1.1"/><path d="M5.4 3.2v4.4" stroke="#4a5fa8" stroke-width="1.1"/></svg>
<svg style="left:52.30px;top:731.68px" width="18" height="16" viewBox="0 0 18 16"><path d="M0.6 4.2V2.2Q0.6 0.8 2 0.8H6.2Q7.2 0.8 7.8 1.8L8.6 3H16.4V4.6z" fill="#6b6b6b"/><path d="M0.6 3.4H7.2" stroke="#555" stroke-width="0"/><rect x="0.6" y="4.3" width="16.2" height="10.6" rx="1.2" fill="#e9b45e"/><rect x="0.6" y="4.3" width="16.2" height="1.2" fill="#f6e3c0"/><rect x="0.6" y="3.6" width="16.2" height="0.9" fill="#8a8a8a"/></svg>
<span id="t31" class="t" style="left:75.30px;top:731.87px;font-size:15.60px;line-height:15.60px;color:#000;font-family:'Liberation Sans', sans-serif;letter-spacing:-1.237px;">POWER GRID</span>
<div class="a" style="left:46.20px;top:762.34px;height:1px;width:5.70px;background:repeating-linear-gradient(90deg,#a0a0a0 0 0.9px,transparent 0.9px 1.85px);"></div>
<svg style="left:35.30px;top:757.04px" width="11" height="11" viewBox="0 0 11 11"><defs><linearGradient id="eg" x1="0" y1="0" x2="1" y2="1"><stop offset="0" stop-color="#fff"/><stop offset="1" stop-color="#d4d4d4"/></linearGradient></defs><rect x="1.2" y="1.2" width="8.4" height="8.4" rx="1" fill="url(#eg)" stroke="#979797" stroke-width="1"/><path d="M3.2 5.4h4.4" stroke="#4a5fa8" stroke-width="1.1"/><path d="M5.4 3.2v4.4" stroke="#4a5fa8" stroke-width="1.1"/></svg>
<svg style="left:52.30px;top:754.34px" width="18" height="16" viewBox="0 0 18 16"><path d="M0.6 4.2V2.2Q0.6 0.8 2 0.8H6.2Q7.2 0.8 7.8 1.8L8.6 3H16.4V4.6z" fill="#6b6b6b"/><path d="M0.6 3.4H7.2" stroke="#555" stroke-width="0"/><rect x="0.6" y="4.3" width="16.2" height="10.6" rx="1.2" fill="#e9b45e"/><rect x="0.6" y="4.3" width="16.2" height="1.2" fill="#f6e3c0"/><rect x="0.6" y="3.6" width="16.2" height="0.9" fill="#8a8a8a"/></svg>
<span id="t32" class="t" style="left:75.30px;top:754.54px;font-size:15.60px;line-height:15.60px;color:#000;font-family:'Liberation Sans', sans-serif;letter-spacing:-1.778px;">SUPPLY</span>
<div class="a" style="left:25.70px;top:785.01px;height:1px;width:5.70px;background:repeating-linear-gradient(90deg,#a0a0a0 0 0.9px,transparent 0.9px 1.85px);"></div>
<svg style="left:14.80px;top:779.71px" width="11" height="11" viewBox="0 0 11 11"><defs><linearGradient id="eg" x1="0" y1="0" x2="1" y2="1"><stop offset="0" stop-color="#fff"/><stop offset="1" stop-color="#d4d4d4"/></linearGradient></defs><rect x="1.2" y="1.2" width="8.4" height="8.4" rx="1" fill="url(#eg)" stroke="#979797" stroke-width="1"/><path d="M3.2 5.4h4.4" stroke="#4a5fa8" stroke-width="1.1"/><path d="M5.4 3.2v4.4" stroke="#4a5fa8" stroke-width="1.1"/></svg>
<svg style="left:31.80px;top:777.01px" width="18" height="16" viewBox="0 0 18 16"><path d="M0.6 4.2V2.2Q0.6 0.8 2 0.8H6.2Q7.2 0.8 7.8 1.8L8.6 3H16.4V4.6z" fill="#6b6b6b"/><path d="M0.6 3.4H7.2" stroke="#555" stroke-width="0"/><rect x="0.6" y="4.3" width="16.2" height="10.6" rx="1.2" fill="#e9b45e"/><rect x="0.6" y="4.3" width="16.2" height="1.2" fill="#f6e3c0"/><rect x="0.6" y="3.6" width="16.2" height="0.9" fill="#8a8a8a"/></svg>
<span id="t33" class="t" style="left:54.80px;top:777.20px;font-size:15.60px;line-height:15.60px;color:#000;font-family:'Liberation Sans', sans-serif;letter-spacing:-0.348px;">Partsmacro</span>
<!-- tree/list tabs -->
<svg style="left:0;top:925px" width="110" height="35"><rect x="13.6" y="3" width="46.6" height="25" fill="#f0f0f0"/><path d="M13.9 4.6V26.6Q13.9 29.4 16.6 29.4" fill="none" stroke="#fff" stroke-width="1.3"/><path d="M16.2 29.5H57.6Q60.3 29.5 60.3 26.8V5.2" fill="none" stroke="#000" stroke-width="1.5"/><path d="M61.9 5.4V23.6Q61.9 26 64.2 26" fill="none" stroke="#fff" stroke-width="1.2"/><path d="M61 26.1H90.6Q93.3 26.1 93.3 23.4V5.2" fill="none" stroke="#000" stroke-width="1.5"/></svg>
<span id="t34" class="t" style="left:19.50px;top:933.99px;font-size:15.60px;line-height:15.60px;color:#000;font-family:'Liberation Sans', sans-serif;letter-spacing:-0.561px;">Tree</span>
<span id="t35" class="t" style="left:65.30px;top:932.99px;font-size:15.60px;line-height:15.60px;color:#000;font-family:'Liberation Sans', sans-serif;letter-spacing:-0.494px;">List</span>
<!-- mdi area -->
<div class="a" style="left:397.80px;top:0.00px;width:1137.20px;height:956.00px;box-sizing:border-box;border-top:1px solid #8c8c8c;border-left:2px solid #707070;background:#f0f0f0;"></div>
<div class="a" style="left:407.80px;top:930.80px;width:1124.00px;height:1.40px;background:#000;"></div>
<div class="a" style="left:1530.60px;top:8.60px;width:1.20px;height:923.30px;background:#000;"></div>
<div class="a" style="left:1531.80px;top:1.00px;width:3.20px;height:956.00px;background:#f0f0f0;"></div>
<div class="a" style="left:399.80px;top:1.00px;width:1131.00px;height:929.70px;box-sizing:border-box;border-top:1.1px solid #fff;"></div>
<div class="a" style="left:407.80px;top:8.20px;width:1122.80px;height:918.60px;background:#fcfcfc;"></div>
<div class="a" style="left:398.00px;top:957.60px;width:1137.00px;height:1.20px;background:#a6a6a6;"></div>
<div class="a" style="left:398.00px;top:958.80px;width:1137.00px;height:1.20px;background:#fafafa;"></div>
<div class="a" style="left:0.00px;top:956.50px;width:394.00px;height:1.00px;background:#e2e2e2;"></div>
<div class="a" style="left:413.20px;top:13.20px;width:1109.60px;height:1.60px;background:#8e8e8e;"></div>
<div class="a" style="left:413.00px;top:13.20px;width:1.50px;height:909.40px;background:#707070;"></div>
<div class="a" style="left:414.40px;top:14.70px;width:553.70px;height:453.30px;">
<div class="a" style="left:0.00px;top:0.00px;width:554.80px;height:454.80px;background:#565656;"></div>
<div class="a" style="left:1.00px;top:1.00px;width:7.00px;height:7.00px;background:#fff;"></div>
<div class="a" style="left:546.60px;top:1.00px;width:7.00px;height:7.00px;background:#fff;"></div>
<div class="a" style="left:0.50px;top:0.40px;width:553.90px;height:453.50px;box-sizing:border-box;background:#d8e5f3;border:1.1px solid #565656;border-radius:8px 8px 0 0;"></div>
<div class="a" style="left:1.60px;top:1.50px;width:552.20px;height:41.00px;background:linear-gradient(#c1cede 0%,#cbd9e8 45%,#dbe7f4 100%);border-radius:7px 7px 0 0;box-shadow:inset 1px 1px 0 rgba(255,255,255,.6),inset -1px 0 0 rgba(255,255,255,.4);"></div>
<svg style="left:13.4px;top:15.6px" width="18" height="19" viewBox="0 0 18 19"><path d="M1.2 0.8H10.4L15.8 6.2V17H1.2z" fill="#f6f7fa" stroke="#d2d5da" stroke-width="0.9"/><path d="M10.4 0.8V6.2H15.8z" fill="#fff" stroke="#cfd2d8" stroke-width="0.8"/><path d="M0.8 17.6H16.2" stroke="#a9a9a9" stroke-width="1.1"/><path d="M0.9 2V17" stroke="#c4c4c8" stroke-width="0.8"/></svg>
<span id="t36" class="t" style="left:42.00px;top:17.46px;font-size:18.00px;line-height:18.00px;color:#000;font-family:'Liberation Sans', sans-serif;letter-spacing:3.369px;">==</span>
<span id="t37" class="t" style="left:68.40px;top:17.46px;font-size:18.00px;line-height:18.00px;color:#000;font-family:'Liberation Sans', sans-serif;letter-spacing:-0.262px;">PARTSMACRO</span>
<span id="t38" class="t" style="left:192.40px;top:17.46px;font-size:18.00px;line-height:18.00px;color:#000;font-family:'Liberation Sans', sans-serif;letter-spacing:2.569px;">++</span>
<span id="t39" class="t" style="left:218.20px;top:17.46px;font-size:18.00px;line-height:18.00px;color:#000;font-family:'Liberation Sans', sans-serif;letter-spacing:-0.537px;">DRIVES&amp;EFS#DRIVE...</span>
<svg style="left:409.40px;top:12.1px" width="44" height="25"><defs><linearGradient id="bg0i" x1="0" y1="0" x2="0" y2="1"><stop offset="0" stop-color="#ccd8e7"/><stop offset=".5" stop-color="#c6d3e3"/><stop offset="1" stop-color="#c1cfe1"/></linearGradient></defs><rect x="0.7" y="0.7" width="41.8" height="23.2" rx="3" fill="url(#bg0i)" stroke="#8a9dbd" stroke-width="1.4"/><rect x="1.9" y="1.9" width="39.4" height="20.8" rx="2" fill="none" stroke="rgba(255,255,255,.5)" stroke-width="1"/></svg>
<svg style="left:421.3px;top:21.9px" width="20" height="8"><rect x="1" y="1" width="16.4" height="4.9" rx="1.2" fill="#fcfcfc" stroke="#444a5e" stroke-width="1.2"/></svg>
<svg style="left:455.00px;top:12.1px" width="44" height="25"><defs><linearGradient id="bg1i" x1="0" y1="0" x2="0" y2="1"><stop offset="0" stop-color="#ccd8e7"/><stop offset=".5" stop-color="#c6d3e3"/><stop offset="1" stop-color="#c1cfe1"/></linearGradient></defs><rect x="0.7" y="0.7" width="41.8" height="23.2" rx="3" fill="url(#bg1i)" stroke="#8a9dbd" stroke-width="1.4"/><rect x="1.9" y="1.9" width="39.4" height="20.8" rx="2" fill="none" stroke="rgba(255,255,255,.5)" stroke-width="1"/></svg>
<svg style="left:466.5px;top:15.9px" width="20" height="17"><rect x="1.1" y="1.1" width="16.6" height="14" rx="1.4" fill="#fbfbfb" stroke="#444a5e" stroke-width="1.2"/><rect x="5.1" y="5.0" width="8.4" height="5.8" fill="#c6d3e3" stroke="#444a5e" stroke-width="1.2"/></svg>
<svg style="left:500.10px;top:12.1px" width="44" height="25"><defs><linearGradient id="bg2i" x1="0" y1="0" x2="0" y2="1"><stop offset="0" stop-color="#ccd8e7"/><stop offset=".5" stop-color="#c6d3e3"/><stop offset="1" stop-color="#c1cfe1"/></linearGradient></defs><rect x="0.7" y="0.7" width="41.8" height="23.2" rx="3" fill="url(#bg2i)" stroke="#8a9dbd" stroke-width="1.4"/><rect x="1.9" y="1.9" width="39.4" height="20.8" rx="2" fill="none" stroke="rgba(255,255,255,.5)" stroke-width="1"/></svg>
<svg style="left:511.5px;top:15.6px" width="20" height="18"><path d="M2.6 2.7L16.8 15.3M16.8 2.7L2.6 15.3" stroke="#444a5e" stroke-width="5.8" stroke-linecap="butt" fill="none"/><path d="M3.4 3.4L16.0 14.6M16.0 3.4L3.4 14.6" stroke="#fbfbfb" stroke-width="3.6" stroke-linecap="butt" fill="none"/></svg>
<div class="a" style="left:10.20px;top:40.60px;width:533.80px;height:405.00px;box-sizing:border-box;background:#f0f0f0;border-top:1.6px solid #686868;border-left:1.6px solid #686868;border-right:1.1px solid #fff;border-bottom:1.1px solid #fff;"></div>
<div class="a" style="left:11.80px;top:42.20px;width:510.60px;height:380.00px;box-sizing:border-box;background:#fff;"></div>
<div class="a" style="left:13.60px;top:43.20px;width:508.80px;height:379.00px;box-sizing:border-box;background:#fff;border-top:1.2px solid #9d9d9d;border-left:1.2px solid #9d9d9d;"></div>
<svg style="left:14.60px;top:44.30px;overflow:hidden;background:#fff" width="508" height="378" viewBox="429 59 508 378">
<path d="M453.50 0.00V2000" stroke="#6b9a3c" stroke-width="1.1" fill="none"/>
<path d="M497.80 0.00V2000" stroke="#ff0d0d" stroke-width="1.3" stroke-dasharray="4 3.4" fill="none"/>
<path d="M763.60 0.00V2000" stroke="#ff0d0d" stroke-width="1.3" stroke-dasharray="4 3.4" fill="none"/>
<path d="M623.50 -10.00V125.30M623.50 154.90V235.30M623.50 251.30V384.70M638.10 66.40V125.30M638.10 154.90V235.30M638.10 251.30V384.70M638.40 66.70h-4.40M653.20 74.20V125.30M653.20 154.90V235.30M653.20 251.30V384.70M653.50 74.50h-4.40M667.60 88.70V2000M667.90 89.00h-4.40" stroke="#ff0d0d" stroke-width="1.3" fill="none"/>
<path d="M653.20 411.70V2000" stroke="#ff0d0d" stroke-width="1.3" fill="none"/>
<path d="M620.70 181.40l5.00 4.60M635.30 181.40l5.00 4.60M650.40 181.40l5.00 4.60" stroke="#ff0d0d" stroke-width="1.1" fill="none"/>
<text x="626.50" y="178.80" font-size="2.70" fill="#ff2a0a" text-anchor="start" font-weight="bold" textLength="3.20" lengthAdjust="spacingAndGlyphs" font-family="Liberation Sans,sans-serif">BK</text>
<text x="626.50" y="181.80" font-size="2.70" fill="#ff2a0a" text-anchor="start" font-weight="bold" textLength="10.40" lengthAdjust="spacingAndGlyphs" font-family="Liberation Sans,sans-serif">1,5 mm²</text>
<text x="641.10" y="178.80" font-size="2.70" fill="#ff2a0a" text-anchor="start" font-weight="bold" textLength="3.20" lengthAdjust="spacingAndGlyphs" font-family="Liberation Sans,sans-serif">BK</text>
<text x="641.10" y="181.80" font-size="2.70" fill="#ff2a0a" text-anchor="start" font-weight="bold" textLength="10.40" lengthAdjust="spacingAndGlyphs" font-family="Liberation Sans,sans-serif">1,5 mm²</text>
<text x="656.20" y="178.80" font-size="2.70" fill="#ff2a0a" text-anchor="start" font-weight="bold" textLength="3.20" lengthAdjust="spacingAndGlyphs" font-family="Liberation Sans,sans-serif">BK</text>
<text x="656.20" y="181.80" font-size="2.70" fill="#ff2a0a" text-anchor="start" font-weight="bold" textLength="10.40" lengthAdjust="spacingAndGlyphs" font-family="Liberation Sans,sans-serif">1,5 mm²</text>
<path d="M620.70 307.90l5.00 4.60M635.30 307.90l5.00 4.60M650.40 307.90l5.00 4.60" stroke="#ff0d0d" stroke-width="1.1" fill="none"/>
<text x="626.50" y="305.30" font-size="2.70" fill="#ff2a0a" text-anchor="start" font-weight="bold" textLength="3.20" lengthAdjust="spacingAndGlyphs" font-family="Liberation Sans,sans-serif">BK</text>
<text x="626.50" y="308.30" font-size="2.70" fill="#ff2a0a" text-anchor="start" font-weight="bold" textLength="10.40" lengthAdjust="spacingAndGlyphs" font-family="Liberation Sans,sans-serif">1,5 mm²</text>
<text x="641.10" y="305.30" font-size="2.70" fill="#ff2a0a" text-anchor="start" font-weight="bold" textLength="3.20" lengthAdjust="spacingAndGlyphs" font-family="Liberation Sans,sans-serif">BK</text>
<text x="641.10" y="308.30" font-size="2.70" fill="#ff2a0a" text-anchor="start" font-weight="bold" textLength="10.40" lengthAdjust="spacingAndGlyphs" font-family="Liberation Sans,sans-serif">1,5 mm²</text>
<text x="656.20" y="305.30" font-size="2.70" fill="#ff2a0a" text-anchor="start" font-weight="bold" textLength="3.20" lengthAdjust="spacingAndGlyphs" font-family="Liberation Sans,sans-serif">BK</text>
<text x="656.20" y="308.30" font-size="2.70" fill="#ff2a0a" text-anchor="start" font-weight="bold" textLength="10.40" lengthAdjust="spacingAndGlyphs" font-family="Liberation Sans,sans-serif">1,5 mm²</text>
<path d="M701.90 218.90l5.00 4.60M716.70 218.90l5.00 4.60M731.90 218.90l5.00 4.60" stroke="#ff0d0d" stroke-width="1.1" fill="none"/>
<text x="707.70" y="216.30" font-size="2.70" fill="#ff2a0a" text-anchor="start" font-weight="bold" textLength="3.20" lengthAdjust="spacingAndGlyphs" font-family="Liberation Sans,sans-serif">BK</text>
<text x="707.70" y="219.30" font-size="2.70" fill="#ff2a0a" text-anchor="start" font-weight="bold" textLength="10.40" lengthAdjust="spacingAndGlyphs" font-family="Liberation Sans,sans-serif">1,5 mm²</text>
<text x="722.50" y="216.30" font-size="2.70" fill="#ff2a0a" text-anchor="start" font-weight="bold" textLength="3.20" lengthAdjust="spacingAndGlyphs" font-family="Liberation Sans,sans-serif">BK</text>
<text x="722.50" y="219.30" font-size="2.70" fill="#ff2a0a" text-anchor="start" font-weight="bold" textLength="10.40" lengthAdjust="spacingAndGlyphs" font-family="Liberation Sans,sans-serif">1,5 mm²</text>
<text x="737.70" y="216.30" font-size="2.70" fill="#ff2a0a" text-anchor="start" font-weight="bold" textLength="3.20" lengthAdjust="spacingAndGlyphs" font-family="Liberation Sans,sans-serif">BK</text>
<text x="737.70" y="219.30" font-size="2.70" fill="#ff2a0a" text-anchor="start" font-weight="bold" textLength="10.40" lengthAdjust="spacingAndGlyphs" font-family="Liberation Sans,sans-serif">1,5 mm²</text>
<path d="M701.90 264.10l5.00 4.60M716.70 264.10l5.00 4.60M731.90 264.10l5.00 4.60" stroke="#ff0d0d" stroke-width="1.1" fill="none"/>
<text x="707.70" y="261.50" font-size="2.70" fill="#ff2a0a" text-anchor="start" font-weight="bold" textLength="3.20" lengthAdjust="spacingAndGlyphs" font-family="Liberation Sans,sans-serif">BK</text>
<text x="707.70" y="264.50" font-size="2.70" fill="#ff2a0a" text-anchor="start" font-weight="bold" textLength="10.40" lengthAdjust="spacingAndGlyphs" font-family="Liberation Sans,sans-serif">1,5 mm²</text>
<text x="722.50" y="261.50" font-size="2.70" fill="#ff2a0a" text-anchor="start" font-weight="bold" textLength="3.20" lengthAdjust="spacingAndGlyphs" font-family="Liberation Sans,sans-serif">BK</text>
<text x="722.50" y="264.50" font-size="2.70" fill="#ff2a0a" text-anchor="start" font-weight="bold" textLength="10.40" lengthAdjust="spacingAndGlyphs" font-family="Liberation Sans,sans-serif">1,5 mm²</text>
<text x="737.70" y="261.50" font-size="2.70" fill="#ff2a0a" text-anchor="start" font-weight="bold" textLength="3.20" lengthAdjust="spacingAndGlyphs" font-family="Liberation Sans,sans-serif">BK</text>
<text x="737.70" y="264.50" font-size="2.70" fill="#ff2a0a" text-anchor="start" font-weight="bold" textLength="10.40" lengthAdjust="spacingAndGlyphs" font-family="Liberation Sans,sans-serif">1,5 mm²</text>
<path d="M623.50 217.90L627.10 214.50H704.70V235.30M638.10 210.60L641.70 207.20H719.50V235.30M653.20 203.30L656.80 199.90H734.70V235.30M704.70 251.30V274.40H656.60L653.20 271.10M719.50 251.30V281.40H641.50L638.10 278.10M734.70 251.30V288.40H626.90L623.50 285.10" stroke="#ff0d0d" stroke-width="1.3" fill="none"/>
<path d="M616.00 137.30H660.60V152.70H616.00ZM616.00 145.30H660.60M630.50 137.30V152.70M645.40 137.30V152.70M623.50 137.30V138.50H627.70V143.10H623.50V145.30M618.30 127.70L623.50 137.30M623.50 125.30V129.30M623.50 152.70V154.90M638.10 137.30V138.50H642.30V143.10H638.10V145.30M632.90 127.70L638.10 137.30M638.10 125.30V129.30M638.10 152.70V154.90M653.20 137.30V138.50H657.40V143.10H653.20V145.30M648.00 127.70L653.20 137.30M653.20 125.30V129.30M653.20 152.70V154.90" stroke="#1414ff" stroke-width="1.2" fill="none"/>
<path d="M621.20 146.60v4.40" stroke="#5a4cff" stroke-width="1.10" stroke-dasharray="1.20 0.80" fill="none"/>
<path d="M622.60 146.70l3.40 2.10l-3.40 2.10z" fill="#3a3cff"/>
<path d="M635.80 146.60v4.40" stroke="#5a4cff" stroke-width="1.10" stroke-dasharray="1.20 0.80" fill="none"/>
<path d="M637.20 146.70l3.40 2.10l-3.40 2.10z" fill="#3a3cff"/>
<path d="M650.90 146.60v4.40" stroke="#5a4cff" stroke-width="1.10" stroke-dasharray="1.20 0.80" fill="none"/>
<path d="M652.30 146.70l3.40 2.10l-3.40 2.10z" fill="#3a3cff"/>
<path d="M613.10 133.40H615.50M619.90 133.40H623.10M626.50 133.40H631.30M634.50 133.40H638.10M641.30 133.40H646.10M649.50 133.40H651.90" stroke="#1414ff" stroke-width="1.2" fill="none"/>
<path d="M616.00 141.20H608.50V148.70H616.00" stroke="#1414ff" stroke-width="1.2" stroke-dasharray="2.60 1.50" fill="none"/>
<path d="M604.70 129.40h7.90v7.90h-7.90zM608.50 127.40v11.20M601.10 133.40h12.60M601.10 131.40v4.00" stroke="#1414ff" stroke-width="1.2" fill="none"/>
<text x="599.50" y="135.30" font-size="5.00" fill="#1414ff" text-anchor="end" font-weight="normal" textLength="9.00" lengthAdjust="spacingAndGlyphs" font-family="Liberation Sans,sans-serif">-Q5</text>
<text x="624.40" y="126.30" font-size="3.20" fill="#141478" text-anchor="start" font-weight="bold" font-family="Liberation Sans,sans-serif">1</text>
<text x="624.40" y="157.30" font-size="3.20" fill="#141478" text-anchor="start" font-weight="bold" font-family="Liberation Sans,sans-serif">2</text>
<text x="639.00" y="126.30" font-size="3.20" fill="#141478" text-anchor="start" font-weight="bold" font-family="Liberation Sans,sans-serif">3</text>
<text x="639.00" y="157.30" font-size="3.20" fill="#141478" text-anchor="start" font-weight="bold" font-family="Liberation Sans,sans-serif">4</text>
<text x="654.10" y="126.30" font-size="3.20" fill="#141478" text-anchor="start" font-weight="bold" font-family="Liberation Sans,sans-serif">5</text>
<text x="654.10" y="157.30" font-size="3.20" fill="#141478" text-anchor="start" font-weight="bold" font-family="Liberation Sans,sans-serif">6</text>
<ellipse cx="622.90" cy="238.00" rx="1.15" ry="1.90" stroke="#1414ff" stroke-width="1.2" fill="none"/>
<ellipse cx="637.50" cy="238.00" rx="1.15" ry="1.90" stroke="#1414ff" stroke-width="1.2" fill="none"/>
<ellipse cx="652.60" cy="238.00" rx="1.15" ry="1.90" stroke="#1414ff" stroke-width="1.2" fill="none"/>
<path d="M618.20 238.50L623.50 247.60V251.30M632.80 238.50L638.10 247.60V251.30M647.90 238.50L653.20 247.60V251.30" stroke="#1414ff" stroke-width="1.2" fill="none"/>
<text x="614.90" y="244.50" font-size="4.60" fill="#1414ff" text-anchor="end" font-weight="normal" textLength="8.00" lengthAdjust="spacingAndGlyphs" font-family="Liberation Sans,sans-serif">-K7</text>
<text x="624.90" y="236.90" font-size="3.20" fill="#141478" text-anchor="start" font-weight="bold" font-family="Liberation Sans,sans-serif">1</text>
<text x="624.50" y="251.90" font-size="3.20" fill="#141478" text-anchor="start" font-weight="bold" font-family="Liberation Sans,sans-serif">2</text>
<text x="639.50" y="236.90" font-size="3.20" fill="#141478" text-anchor="start" font-weight="bold" font-family="Liberation Sans,sans-serif">3</text>
<text x="639.10" y="251.90" font-size="3.20" fill="#141478" text-anchor="start" font-weight="bold" font-family="Liberation Sans,sans-serif">4</text>
<text x="654.60" y="236.90" font-size="3.20" fill="#141478" text-anchor="start" font-weight="bold" font-family="Liberation Sans,sans-serif">5</text>
<text x="654.20" y="251.90" font-size="3.20" fill="#141478" text-anchor="start" font-weight="bold" font-family="Liberation Sans,sans-serif">6</text>
<ellipse cx="704.10" cy="238.00" rx="1.15" ry="1.90" stroke="#1414ff" stroke-width="1.2" fill="none"/>
<ellipse cx="718.90" cy="238.00" rx="1.15" ry="1.90" stroke="#1414ff" stroke-width="1.2" fill="none"/>
<ellipse cx="734.10" cy="238.00" rx="1.15" ry="1.90" stroke="#1414ff" stroke-width="1.2" fill="none"/>
<path d="M699.40 238.50L704.70 247.60V251.30M714.20 238.50L719.50 247.60V251.30M729.40 238.50L734.70 247.60V251.30" stroke="#1414ff" stroke-width="1.2" fill="none"/>
<text x="696.10" y="244.50" font-size="4.60" fill="#1414ff" text-anchor="end" font-weight="normal" textLength="8.00" lengthAdjust="spacingAndGlyphs" font-family="Liberation Sans,sans-serif">-K7</text>
<text x="706.10" y="236.90" font-size="3.20" fill="#141478" text-anchor="start" font-weight="bold" font-family="Liberation Sans,sans-serif">1</text>
<text x="705.70" y="251.90" font-size="3.20" fill="#141478" text-anchor="start" font-weight="bold" font-family="Liberation Sans,sans-serif">2</text>
<text x="720.90" y="236.90" font-size="3.20" fill="#141478" text-anchor="start" font-weight="bold" font-family="Liberation Sans,sans-serif">3</text>
<text x="720.50" y="251.90" font-size="3.20" fill="#141478" text-anchor="start" font-weight="bold" font-family="Liberation Sans,sans-serif">4</text>
<text x="736.10" y="236.90" font-size="3.20" fill="#141478" text-anchor="start" font-weight="bold" font-family="Liberation Sans,sans-serif">5</text>
<text x="735.70" y="251.90" font-size="3.20" fill="#141478" text-anchor="start" font-weight="bold" font-family="Liberation Sans,sans-serif">6</text>
<circle cx="623.50" cy="340.30" r="1.55" fill="#fff" stroke="#1414ff" stroke-width="1.2"/>
<text x="625.70" y="341.70" font-size="3.40" fill="#141478" text-anchor="start" font-weight="bold" font-family="Liberation Sans,sans-serif">4</text>
<circle cx="638.10" cy="340.30" r="1.55" fill="#fff" stroke="#1414ff" stroke-width="1.2"/>
<text x="640.30" y="341.70" font-size="3.40" fill="#141478" text-anchor="start" font-weight="bold" font-family="Liberation Sans,sans-serif">5</text>
<circle cx="653.20" cy="340.30" r="1.55" fill="#fff" stroke="#1414ff" stroke-width="1.2"/>
<text x="655.40" y="341.70" font-size="3.40" fill="#141478" text-anchor="start" font-weight="bold" font-family="Liberation Sans,sans-serif">7</text>
<circle cx="667.60" cy="340.30" r="1.55" fill="#fff" stroke="#1414ff" stroke-width="1.2"/>
<text x="669.80" y="341.70" font-size="3.40" fill="#141478" text-anchor="start" font-weight="bold" font-family="Liberation Sans,sans-serif">8</text>
<text x="619.90" y="341.90" font-size="4.60" fill="#1414ff" text-anchor="end" font-weight="normal" textLength="7.20" lengthAdjust="spacingAndGlyphs" font-family="Liberation Sans,sans-serif">-X1</text>
<path d="M593.30 362.50H690.70" stroke="#1414ff" stroke-width="1.4" fill="none"/>
<text x="593.10" y="361.30" font-size="4.80" fill="#1414ff" text-anchor="end" font-weight="normal" textLength="12.40" lengthAdjust="spacingAndGlyphs" font-family="Liberation Sans,sans-serif">-W74</text>
<text x="626.10" y="357.30" font-size="2.80" fill="#ff2a0a" text-anchor="start" font-weight="bold" textLength="3.40" lengthAdjust="spacingAndGlyphs" font-family="Liberation Sans,sans-serif">BN</text>
<text x="626.10" y="360.70" font-size="2.80" fill="#ff2a0a" text-anchor="start" font-weight="bold" textLength="3.20" lengthAdjust="spacingAndGlyphs" font-family="Liberation Sans,sans-serif">1,5</text>
<text x="640.70" y="357.30" font-size="2.80" fill="#ff2a0a" text-anchor="start" font-weight="bold" textLength="3.40" lengthAdjust="spacingAndGlyphs" font-family="Liberation Sans,sans-serif">BU</text>
<text x="640.70" y="360.70" font-size="2.80" fill="#ff2a0a" text-anchor="start" font-weight="bold" textLength="3.20" lengthAdjust="spacingAndGlyphs" font-family="Liberation Sans,sans-serif">1,5</text>
<text x="655.80" y="357.30" font-size="2.80" fill="#ff2a0a" text-anchor="start" font-weight="bold" textLength="3.40" lengthAdjust="spacingAndGlyphs" font-family="Liberation Sans,sans-serif">BK</text>
<text x="655.80" y="360.70" font-size="2.80" fill="#ff2a0a" text-anchor="start" font-weight="bold" textLength="3.20" lengthAdjust="spacingAndGlyphs" font-family="Liberation Sans,sans-serif">1,5</text>
<text x="670.20" y="357.30" font-size="2.80" fill="#ff2a0a" text-anchor="start" font-weight="bold" textLength="6.00" lengthAdjust="spacingAndGlyphs" font-family="Liberation Sans,sans-serif">GNYE</text>
<text x="670.20" y="360.70" font-size="2.80" fill="#ff2a0a" text-anchor="start" font-weight="bold" textLength="3.20" lengthAdjust="spacingAndGlyphs" font-family="Liberation Sans,sans-serif">1,5</text>
<path d="M621.10 360.30l4.60 4.40M635.70 360.30l4.60 4.40M650.80 360.30l4.60 4.40M665.20 360.30l4.60 4.40" stroke="#ff0d0d" stroke-width="1.1" fill="none"/>
<text x="601.80" y="377.50" font-size="4.90" fill="#1414ff" text-anchor="end" font-weight="normal" textLength="49.60" lengthAdjust="spacingAndGlyphs" font-family="Liberation Sans,sans-serif">#&lt;DRIVE_POWER&gt;</text>
<text x="602.30" y="384.70" font-size="4.90" fill="#1414ff" text-anchor="end" font-weight="normal" textLength="11.60" lengthAdjust="spacingAndGlyphs" font-family="Liberation Sans,sans-serif">Lapp</text>
<path d="M608.50 377.10V384.90M604.60 381.90Q605.10 384.90 608.50 384.90Q611.90 384.90 612.40 381.30" stroke="#ff0d0d" stroke-width="1.2" fill="none"/>
<circle cx="608.50" cy="376.60" r="0.70" fill="none" stroke="#ff0d0d" stroke-width="0.9"/>
<path d="M549.60 399.10V406.90M545.70 403.90Q546.20 406.90 549.60 406.90Q553.00 406.90 553.50 403.30" stroke="#ff0d0d" stroke-width="1.2" fill="none"/>
<circle cx="549.60" cy="398.60" r="0.70" fill="none" stroke="#ff0d0d" stroke-width="0.9"/>
<circle cx="638.30" cy="399.20" r="10.90" fill="#fff" stroke="#1414ff" stroke-width="1.3"/>
<path d="M623.50 384.70V388.90L629.30 392.70M638.10 384.70V388.30M653.20 384.70V388.90L647.30 392.70M647.70 406.90L653.20 411.90" stroke="#1414ff" stroke-width="1.2" fill="none"/>
<text x="638.10" y="397.90" font-size="6.40" fill="#3c3cff" text-anchor="middle" font-weight="normal" font-family="Liberation Sans,sans-serif">M</text>
<text x="636.70" y="405.90" font-size="6.40" fill="#3c3cff" text-anchor="middle" font-weight="normal" font-family="Liberation Sans,sans-serif">3~</text>
<text x="624.30" y="385.90" font-size="3.00" fill="#141478" text-anchor="start" font-weight="bold" font-family="Liberation Sans,sans-serif">U1</text>
<text x="638.90" y="385.90" font-size="3.00" fill="#141478" text-anchor="start" font-weight="bold" font-family="Liberation Sans,sans-serif">V1</text>
<text x="654.10" y="385.90" font-size="3.00" fill="#141478" text-anchor="start" font-weight="bold" font-family="Liberation Sans,sans-serif">W1</text>
<text x="654.90" y="414.50" font-size="3.00" fill="#000" text-anchor="start" font-weight="bold" font-family="Liberation Sans,sans-serif">PE</text>
<text x="616.10" y="400.90" font-size="4.80" fill="#1414ff" text-anchor="end" font-weight="normal" textLength="8.80" lengthAdjust="spacingAndGlyphs" font-family="Liberation Sans,sans-serif">-M4</text>
<text x="616.10" y="406.20" font-size="3.20" fill="#000" text-anchor="end" font-weight="bold" textLength="27.40" lengthAdjust="spacingAndGlyphs" font-family="Liberation Sans,sans-serif">Standardmotor</text>

</svg>
<div class="a" style="left:522.40px;top:43.80px;width:20.60px;height:378.40px;background:#f0f0f0;"></div>
<div class="a" style="left:522.90px;top:76.30px;width:18.60px;height:232.00px;background:#cdcdcd;"></div>
<div class="a" style="left:13.80px;top:422.40px;width:508.60px;height:22.20px;background:#f0f0f0;"></div>
<div class="a" style="left:33.60px;top:422.70px;width:295.00px;height:19.50px;background:#cdcdcd;"></div>
<svg style="left:0;top:0" width="553.7" height="453.3">
<path d="M527.60 55.60l4.8 -5.2 4.8 5.2" stroke="#3c3c3c" stroke-width="2.1" fill="none"/>
<path d="M527.60 408.00l4.8 5.2 4.8 -5.2" stroke="#3c3c3c" stroke-width="2.1" fill="none"/>
<path d="M24.40 427.70l-5.2 4.8 5.2 4.8" stroke="#3c3c3c" stroke-width="2.1" fill="none"/>
<path d="M508.00 427.80l5.2 4.8 -5.2 4.8" stroke="#3c3c3c" stroke-width="2.1" fill="none"/>
<rect x="537.0" y="430.6" width="2.7" height="2.7" fill="#c3c3c3"/><rect x="533.1" y="434.4" width="2.7" height="2.7" fill="#c3c3c3"/><rect x="537.0" y="434.4" width="2.7" height="2.7" fill="#c3c3c3"/><rect x="529.2" y="438.2" width="2.7" height="2.7" fill="#c3c3c3"/><rect x="533.1" y="438.2" width="2.7" height="2.7" fill="#c3c3c3"/><rect x="537.0" y="438.2" width="2.7" height="2.7" fill="#c3c3c3"/>
</svg>
</div>
<div class="a" style="left:968.10px;top:14.70px;width:553.70px;height:453.30px;">
<div class="a" style="left:0.00px;top:0.00px;width:554.80px;height:454.80px;background:#565656;"></div>
<div class="a" style="left:1.00px;top:1.00px;width:7.00px;height:7.00px;background:#fff;"></div>
<div class="a" style="left:546.60px;top:1.00px;width:7.00px;height:7.00px;background:#fff;"></div>
<div class="a" style="left:0.50px;top:0.40px;width:553.90px;height:453.50px;box-sizing:border-box;background:#d8e5f3;border:1.1px solid #565656;border-radius:8px 8px 0 0;"></div>
<div class="a" style="left:1.60px;top:1.50px;width:552.20px;height:41.00px;background:linear-gradient(#c1cede 0%,#cbd9e8 45%,#dbe7f4 100%);border-radius:7px 7px 0 0;box-shadow:inset 1px 1px 0 rgba(255,255,255,.6),inset -1px 0 0 rgba(255,255,255,.4);"></div>
<svg style="left:13.4px;top:15.6px" width="18" height="19" viewBox="0 0 18 19"><path d="M1.2 0.8H10.4L15.8 6.2V17H1.2z" fill="#f6f7fa" stroke="#d2d5da" stroke-width="0.9"/><path d="M10.4 0.8V6.2H15.8z" fill="#fff" stroke="#cfd2d8" stroke-width="0.8"/><path d="M0.8 17.6H16.2" stroke="#a9a9a9" stroke-width="1.1"/><path d="M0.9 2V17" stroke="#c4c4c8" stroke-width="0.8"/></svg>
<span id="t40" class="t" style="left:42.00px;top:17.46px;font-size:18.00px;line-height:18.00px;color:#000;font-family:'Liberation Sans', sans-serif;letter-spacing:3.369px;">==</span>
<span id="t41" class="t" style="left:68.40px;top:17.46px;font-size:18.00px;line-height:18.00px;color:#000;font-family:'Liberation Sans', sans-serif;letter-spacing:-0.262px;">PARTSMACRO</span>
<span id="t42" class="t" style="left:192.40px;top:17.46px;font-size:18.00px;line-height:18.00px;color:#000;font-family:'Liberation Sans', sans-serif;letter-spacing:2.569px;">++</span>
<span id="t43" class="t" style="left:218.20px;top:17.46px;font-size:18.00px;line-height:18.00px;color:#000;font-family:'Liberation Sans', sans-serif;letter-spacing:-0.537px;">DRIVES&amp;EFS#DRIVE...</span>
<svg style="left:409.40px;top:12.1px" width="44" height="25"><defs><linearGradient id="bg0i" x1="0" y1="0" x2="0" y2="1"><stop offset="0" stop-color="#ccd8e7"/><stop offset=".5" stop-color="#c6d3e3"/><stop offset="1" stop-color="#c1cfe1"/></linearGradient></defs><rect x="0.7" y="0.7" width="41.8" height="23.2" rx="3" fill="url(#bg0i)" stroke="#8a9dbd" stroke-width="1.4"/><rect x="1.9" y="1.9" width="39.4" height="20.8" rx="2" fill="none" stroke="rgba(255,255,255,.5)" stroke-width="1"/></svg>
<svg style="left:421.3px;top:21.9px" width="20" height="8"><rect x="1" y="1" width="16.4" height="4.9" rx="1.2" fill="#fcfcfc" stroke="#444a5e" stroke-width="1.2"/></svg>
<svg style="left:455.00px;top:12.1px" width="44" height="25"><defs><linearGradient id="bg1i" x1="0" y1="0" x2="0" y2="1"><stop offset="0" stop-color="#ccd8e7"/><stop offset=".5" stop-color="#c6d3e3"/><stop offset="1" stop-color="#c1cfe1"/></linearGradient></defs><rect x="0.7" y="0.7" width="41.8" height="23.2" rx="3" fill="url(#bg1i)" stroke="#8a9dbd" stroke-width="1.4"/><rect x="1.9" y="1.9" width="39.4" height="20.8" rx="2" fill="none" stroke="rgba(255,255,255,.5)" stroke-width="1"/></svg>
<svg style="left:466.5px;top:15.9px" width="20" height="17"><rect x="1.1" y="1.1" width="16.6" height="14" rx="1.4" fill="#fbfbfb" stroke="#444a5e" stroke-width="1.2"/><rect x="5.1" y="5.0" width="8.4" height="5.8" fill="#c6d3e3" stroke="#444a5e" stroke-width="1.2"/></svg>
<svg style="left:500.10px;top:12.1px" width="44" height="25"><defs><linearGradient id="bg2i" x1="0" y1="0" x2="0" y2="1"><stop offset="0" stop-color="#ccd8e7"/><stop offset=".5" stop-color="#c6d3e3"/><stop offset="1" stop-color="#c1cfe1"/></linearGradient></defs><rect x="0.7" y="0.7" width="41.8" height="23.2" rx="3" fill="url(#bg2i)" stroke="#8a9dbd" stroke-width="1.4"/><rect x="1.9" y="1.9" width="39.4" height="20.8" rx="2" fill="none" stroke="rgba(255,255,255,.5)" stroke-width="1"/></svg>
<svg style="left:511.5px;top:15.6px" width="20" height="18"><path d="M2.6 2.7L16.8 15.3M16.8 2.7L2.6 15.3" stroke="#444a5e" stroke-width="5.8" stroke-linecap="butt" fill="none"/><path d="M3.4 3.4L16.0 14.6M16.0 3.4L3.4 14.6" stroke="#fbfbfb" stroke-width="3.6" stroke-linecap="butt" fill="none"/></svg>
<div class="a" style="left:10.20px;top:40.60px;width:533.80px;height:405.00px;box-sizing:border-box;background:#f0f0f0;border-top:1.6px solid #686868;border-left:1.6px solid #686868;border-right:1.1px solid #fff;border-bottom:1.1px solid #fff;"></div>
<div class="a" style="left:11.80px;top:42.20px;width:510.60px;height:380.00px;box-sizing:border-box;background:#fff;"></div>
<div class="a" style="left:13.60px;top:43.20px;width:508.80px;height:379.00px;box-sizing:border-box;background:#fff;border-top:1.2px solid #9d9d9d;border-left:1.2px solid #9d9d9d;"></div>
<svg style="left:14.90px;top:44.30px;overflow:hidden;background:#fff" width="507" height="378" viewBox="983 59 507 378">
<path d="M1002.40 0.00V2000" stroke="#ff0d0d" stroke-width="1.3" stroke-dasharray="4 3.4" fill="none"/>
<path d="M1248.40 0.00V2000" stroke="#ff0d0d" stroke-width="1.3" stroke-dasharray="4 3.4" fill="none"/>
<path d="M1142.30 -10.00V96.00M1142.30 128.81V217.93M1142.30 235.67V383.54M1158.58 -10.00V96.00M1158.58 128.81V217.93M1158.58 235.67V383.54M1175.42 -10.00V96.00M1175.42 128.81V217.93M1175.42 235.67V383.54M1191.47 -10.00V2000" stroke="#ff0d0d" stroke-width="1.3" fill="none"/>
<path d="M1175.42 413.47V2000" stroke="#ff0d0d" stroke-width="1.3" fill="none"/>
<path d="M1139.18 158.18l5.58 5.13M1155.46 158.18l5.58 5.13M1172.29 158.18l5.58 5.13" stroke="#ff0d0d" stroke-width="1.1" fill="none"/>
<text x="1145.64" y="155.30" font-size="3.01" fill="#ff2a0a" text-anchor="start" font-weight="bold" textLength="3.57" lengthAdjust="spacingAndGlyphs" font-family="Liberation Sans,sans-serif">BK</text>
<text x="1145.64" y="158.63" font-size="3.01" fill="#ff2a0a" text-anchor="start" font-weight="bold" textLength="11.60" lengthAdjust="spacingAndGlyphs" font-family="Liberation Sans,sans-serif">1,5 mm²</text>
<text x="1161.92" y="155.30" font-size="3.01" fill="#ff2a0a" text-anchor="start" font-weight="bold" textLength="3.57" lengthAdjust="spacingAndGlyphs" font-family="Liberation Sans,sans-serif">BK</text>
<text x="1161.92" y="158.63" font-size="3.01" fill="#ff2a0a" text-anchor="start" font-weight="bold" textLength="11.60" lengthAdjust="spacingAndGlyphs" font-family="Liberation Sans,sans-serif">1,5 mm²</text>
<text x="1178.76" y="155.30" font-size="3.01" fill="#ff2a0a" text-anchor="start" font-weight="bold" textLength="3.57" lengthAdjust="spacingAndGlyphs" font-family="Liberation Sans,sans-serif">BK</text>
<text x="1178.76" y="158.63" font-size="3.01" fill="#ff2a0a" text-anchor="start" font-weight="bold" textLength="11.60" lengthAdjust="spacingAndGlyphs" font-family="Liberation Sans,sans-serif">1,5 mm²</text>
<path d="M1139.18 298.41l5.58 5.13M1155.46 298.41l5.58 5.13M1172.29 298.41l5.58 5.13" stroke="#ff0d0d" stroke-width="1.1" fill="none"/>
<text x="1145.64" y="295.53" font-size="3.01" fill="#ff2a0a" text-anchor="start" font-weight="bold" textLength="3.57" lengthAdjust="spacingAndGlyphs" font-family="Liberation Sans,sans-serif">BK</text>
<text x="1145.64" y="298.85" font-size="3.01" fill="#ff2a0a" text-anchor="start" font-weight="bold" textLength="11.60" lengthAdjust="spacingAndGlyphs" font-family="Liberation Sans,sans-serif">1,5 mm²</text>
<text x="1161.92" y="295.53" font-size="3.01" fill="#ff2a0a" text-anchor="start" font-weight="bold" textLength="3.57" lengthAdjust="spacingAndGlyphs" font-family="Liberation Sans,sans-serif">BK</text>
<text x="1161.92" y="298.85" font-size="3.01" fill="#ff2a0a" text-anchor="start" font-weight="bold" textLength="11.60" lengthAdjust="spacingAndGlyphs" font-family="Liberation Sans,sans-serif">1,5 mm²</text>
<text x="1178.76" y="295.53" font-size="3.01" fill="#ff2a0a" text-anchor="start" font-weight="bold" textLength="3.57" lengthAdjust="spacingAndGlyphs" font-family="Liberation Sans,sans-serif">BK</text>
<text x="1178.76" y="298.85" font-size="3.01" fill="#ff2a0a" text-anchor="start" font-weight="bold" textLength="11.60" lengthAdjust="spacingAndGlyphs" font-family="Liberation Sans,sans-serif">1,5 mm²</text>
<path d="M1133.94 109.30H1183.67V126.37H1133.94ZM1133.94 118.17H1183.67M1150.11 109.30V126.37M1166.72 109.30V126.37M1142.30 109.30V110.63H1146.98V115.73H1142.30V118.17M1136.50 98.66L1142.30 109.30M1142.30 96.00V100.43M1142.30 126.37V128.81M1158.58 109.30V110.63H1163.26V115.73H1158.58V118.17M1152.78 98.66L1158.58 109.30M1158.58 96.00V100.43M1158.58 126.37V128.81M1175.42 109.30V110.63H1180.10V115.73H1175.42V118.17M1169.62 98.66L1175.42 109.30M1175.42 96.00V100.43M1175.42 126.37V128.81" stroke="#1414ff" stroke-width="1.2" fill="none"/>
<path d="M1139.74 119.61v4.91" stroke="#5a4cff" stroke-width="1.23" stroke-dasharray="1.34 0.89" fill="none"/>
<path d="M1141.30 119.72l3.79 2.34l-3.79 2.34z" fill="#3a3cff"/>
<path d="M1156.01 119.61v4.91" stroke="#5a4cff" stroke-width="1.23" stroke-dasharray="1.34 0.89" fill="none"/>
<path d="M1157.58 119.72l3.79 2.34l-3.79 2.34z" fill="#3a3cff"/>
<path d="M1172.85 119.61v4.91" stroke="#5a4cff" stroke-width="1.23" stroke-dasharray="1.34 0.89" fill="none"/>
<path d="M1174.41 119.72l3.79 2.34l-3.79 2.34z" fill="#3a3cff"/>
<path d="M1130.70 104.98H1133.38M1138.29 104.98H1141.85M1145.64 104.98H1151.00M1154.57 104.98H1158.58M1162.15 104.98H1167.50M1171.29 104.98H1173.97" stroke="#1414ff" stroke-width="1.2" fill="none"/>
<path d="M1133.94 113.62H1125.58V121.94H1133.94" stroke="#1414ff" stroke-width="1.2" stroke-dasharray="2.90 1.67" fill="none"/>
<path d="M1121.34 100.54h8.81v8.81h-8.81zM1125.58 98.33v12.49M1117.32 104.98h14.05M1117.32 102.76v4.46" stroke="#1414ff" stroke-width="1.2" fill="none"/>
<text x="1115.54" y="107.08" font-size="5.58" fill="#1414ff" text-anchor="end" font-weight="normal" textLength="10.04" lengthAdjust="spacingAndGlyphs" font-family="Liberation Sans,sans-serif">-Q4</text>
<text x="1143.30" y="97.11" font-size="3.57" fill="#141478" text-anchor="start" font-weight="bold" font-family="Liberation Sans,sans-serif">1</text>
<text x="1143.30" y="131.47" font-size="3.57" fill="#141478" text-anchor="start" font-weight="bold" font-family="Liberation Sans,sans-serif">2</text>
<text x="1159.58" y="97.11" font-size="3.57" fill="#141478" text-anchor="start" font-weight="bold" font-family="Liberation Sans,sans-serif">3</text>
<text x="1159.58" y="131.47" font-size="3.57" fill="#141478" text-anchor="start" font-weight="bold" font-family="Liberation Sans,sans-serif">4</text>
<text x="1176.42" y="97.11" font-size="3.57" fill="#141478" text-anchor="start" font-weight="bold" font-family="Liberation Sans,sans-serif">5</text>
<text x="1176.42" y="131.47" font-size="3.57" fill="#141478" text-anchor="start" font-weight="bold" font-family="Liberation Sans,sans-serif">6</text>
<ellipse cx="1141.63" cy="220.93" rx="1.28" ry="2.12" stroke="#1414ff" stroke-width="1.2" fill="none"/>
<ellipse cx="1157.91" cy="220.93" rx="1.28" ry="2.12" stroke="#1414ff" stroke-width="1.2" fill="none"/>
<ellipse cx="1174.75" cy="220.93" rx="1.28" ry="2.12" stroke="#1414ff" stroke-width="1.2" fill="none"/>
<path d="M1136.39 221.48L1142.30 231.57V235.67M1152.67 221.48L1158.58 231.57V235.67M1169.51 221.48L1175.42 231.57V235.67" stroke="#1414ff" stroke-width="1.2" fill="none"/>
<text x="1132.71" y="228.13" font-size="5.13" fill="#1414ff" text-anchor="end" font-weight="normal" textLength="8.92" lengthAdjust="spacingAndGlyphs" font-family="Liberation Sans,sans-serif">-K7</text>
<text x="1143.86" y="219.71" font-size="3.57" fill="#141478" text-anchor="start" font-weight="bold" font-family="Liberation Sans,sans-serif">1</text>
<text x="1143.41" y="236.33" font-size="3.57" fill="#141478" text-anchor="start" font-weight="bold" font-family="Liberation Sans,sans-serif">2</text>
<text x="1160.14" y="219.71" font-size="3.57" fill="#141478" text-anchor="start" font-weight="bold" font-family="Liberation Sans,sans-serif">3</text>
<text x="1159.69" y="236.33" font-size="3.57" fill="#141478" text-anchor="start" font-weight="bold" font-family="Liberation Sans,sans-serif">4</text>
<text x="1176.98" y="219.71" font-size="3.57" fill="#141478" text-anchor="start" font-weight="bold" font-family="Liberation Sans,sans-serif">5</text>
<text x="1176.53" y="236.33" font-size="3.57" fill="#141478" text-anchor="start" font-weight="bold" font-family="Liberation Sans,sans-serif">6</text>
<circle cx="1142.30" cy="334.33" r="1.73" fill="#fff" stroke="#1414ff" stroke-width="1.2"/>
<text x="1144.75" y="335.88" font-size="3.79" fill="#141478" text-anchor="start" font-weight="bold" font-family="Liberation Sans,sans-serif">4</text>
<circle cx="1158.58" cy="334.33" r="1.73" fill="#fff" stroke="#1414ff" stroke-width="1.2"/>
<text x="1161.03" y="335.88" font-size="3.79" fill="#141478" text-anchor="start" font-weight="bold" font-family="Liberation Sans,sans-serif">5</text>
<circle cx="1175.42" cy="334.33" r="1.73" fill="#fff" stroke="#1414ff" stroke-width="1.2"/>
<text x="1177.87" y="335.88" font-size="3.79" fill="#141478" text-anchor="start" font-weight="bold" font-family="Liberation Sans,sans-serif">7</text>
<circle cx="1191.47" cy="334.33" r="1.73" fill="#fff" stroke="#1414ff" stroke-width="1.2"/>
<text x="1193.92" y="335.88" font-size="3.79" fill="#141478" text-anchor="start" font-weight="bold" font-family="Liberation Sans,sans-serif">8</text>
<text x="1138.29" y="336.10" font-size="5.13" fill="#1414ff" text-anchor="end" font-weight="normal" textLength="8.03" lengthAdjust="spacingAndGlyphs" font-family="Liberation Sans,sans-serif">-X1</text>
<path d="M1108.63 358.93H1217.23" stroke="#1414ff" stroke-width="1.4" fill="none"/>
<text x="1108.40" y="357.60" font-size="5.35" fill="#1414ff" text-anchor="end" font-weight="normal" textLength="13.83" lengthAdjust="spacingAndGlyphs" font-family="Liberation Sans,sans-serif">-W72</text>
<text x="1145.20" y="353.17" font-size="3.12" fill="#ff2a0a" text-anchor="start" font-weight="bold" textLength="3.79" lengthAdjust="spacingAndGlyphs" font-family="Liberation Sans,sans-serif">BN</text>
<text x="1145.20" y="356.94" font-size="3.12" fill="#ff2a0a" text-anchor="start" font-weight="bold" textLength="3.57" lengthAdjust="spacingAndGlyphs" font-family="Liberation Sans,sans-serif">1,5</text>
<text x="1161.48" y="353.17" font-size="3.12" fill="#ff2a0a" text-anchor="start" font-weight="bold" textLength="3.79" lengthAdjust="spacingAndGlyphs" font-family="Liberation Sans,sans-serif">BU</text>
<text x="1161.48" y="356.94" font-size="3.12" fill="#ff2a0a" text-anchor="start" font-weight="bold" textLength="3.57" lengthAdjust="spacingAndGlyphs" font-family="Liberation Sans,sans-serif">1,5</text>
<text x="1178.31" y="353.17" font-size="3.12" fill="#ff2a0a" text-anchor="start" font-weight="bold" textLength="3.79" lengthAdjust="spacingAndGlyphs" font-family="Liberation Sans,sans-serif">BK</text>
<text x="1178.31" y="356.94" font-size="3.12" fill="#ff2a0a" text-anchor="start" font-weight="bold" textLength="3.57" lengthAdjust="spacingAndGlyphs" font-family="Liberation Sans,sans-serif">1,5</text>
<text x="1194.37" y="353.17" font-size="3.12" fill="#ff2a0a" text-anchor="start" font-weight="bold" textLength="6.69" lengthAdjust="spacingAndGlyphs" font-family="Liberation Sans,sans-serif">GNYE</text>
<text x="1194.37" y="356.94" font-size="3.12" fill="#ff2a0a" text-anchor="start" font-weight="bold" textLength="3.57" lengthAdjust="spacingAndGlyphs" font-family="Liberation Sans,sans-serif">1,5</text>
<path d="M1139.62 356.50l5.13 4.91M1155.90 356.50l5.13 4.91M1172.74 356.50l5.13 4.91M1188.80 356.50l5.13 4.91" stroke="#ff0d0d" stroke-width="1.1" fill="none"/>
<text x="1118.10" y="375.56" font-size="5.46" fill="#1414ff" text-anchor="end" font-weight="normal" textLength="55.30" lengthAdjust="spacingAndGlyphs" font-family="Liberation Sans,sans-serif">#&lt;DRIVE_POWER&gt;</text>
<text x="1118.66" y="383.54" font-size="5.46" fill="#1414ff" text-anchor="end" font-weight="normal" textLength="12.93" lengthAdjust="spacingAndGlyphs" font-family="Liberation Sans,sans-serif">Lapp</text>
<path d="M1125.58 375.12V383.76M1121.23 380.44Q1121.78 383.76 1125.58 383.76Q1129.37 383.76 1129.92 379.77" stroke="#ff0d0d" stroke-width="1.2" fill="none"/>
<circle cx="1125.58" cy="374.56" r="0.78" fill="none" stroke="#ff0d0d" stroke-width="0.9"/>
<path d="M1051.43 399.28V407.93M1047.08 404.60Q1047.64 407.93 1051.43 407.93Q1055.22 407.93 1055.78 403.94" stroke="#ff0d0d" stroke-width="1.2" fill="none"/>
<circle cx="1051.43" cy="398.73" r="0.78" fill="none" stroke="#ff0d0d" stroke-width="0.9"/>
<circle cx="1158.80" cy="399.62" r="12.15" fill="#fff" stroke="#1414ff" stroke-width="1.3"/>
<path d="M1142.30 383.54V388.20L1148.77 392.41M1158.58 383.54V387.53M1175.42 383.54V388.20L1168.84 392.41M1169.28 408.15L1175.42 413.69" stroke="#1414ff" stroke-width="1.2" fill="none"/>
<text x="1158.58" y="398.18" font-size="7.14" fill="#3c3cff" text-anchor="middle" font-weight="normal" font-family="Liberation Sans,sans-serif">M</text>
<text x="1157.02" y="407.04" font-size="7.14" fill="#3c3cff" text-anchor="middle" font-weight="normal" font-family="Liberation Sans,sans-serif">3~</text>
<text x="1143.19" y="384.87" font-size="3.34" fill="#141478" text-anchor="start" font-weight="bold" font-family="Liberation Sans,sans-serif">U1</text>
<text x="1159.47" y="384.87" font-size="3.34" fill="#141478" text-anchor="start" font-weight="bold" font-family="Liberation Sans,sans-serif">V1</text>
<text x="1176.42" y="384.87" font-size="3.34" fill="#141478" text-anchor="start" font-weight="bold" font-family="Liberation Sans,sans-serif">W1</text>
<text x="1177.31" y="416.58" font-size="3.34" fill="#000" text-anchor="start" font-weight="bold" font-family="Liberation Sans,sans-serif">PE</text>
<text x="1134.05" y="401.50" font-size="5.35" fill="#1414ff" text-anchor="end" font-weight="normal" textLength="9.81" lengthAdjust="spacingAndGlyphs" font-family="Liberation Sans,sans-serif">-M2</text>
<text x="1134.05" y="407.38" font-size="3.57" fill="#000" text-anchor="end" font-weight="bold" textLength="30.55" lengthAdjust="spacingAndGlyphs" font-family="Liberation Sans,sans-serif">Standardmotor</text>

</svg>
<div class="a" style="left:522.40px;top:43.80px;width:20.60px;height:378.40px;background:#f0f0f0;"></div>
<div class="a" style="left:522.90px;top:97.30px;width:18.60px;height:208.00px;background:#cdcdcd;"></div>
<div class="a" style="left:13.80px;top:422.40px;width:508.60px;height:22.20px;background:#f0f0f0;"></div>
<div class="a" style="left:48.90px;top:422.70px;width:274.60px;height:19.50px;background:#cdcdcd;"></div>
<svg style="left:0;top:0" width="553.7" height="453.3">
<path d="M527.60 55.60l4.8 -5.2 4.8 5.2" stroke="#3c3c3c" stroke-width="2.1" fill="none"/>
<path d="M527.60 408.00l4.8 5.2 4.8 -5.2" stroke="#3c3c3c" stroke-width="2.1" fill="none"/>
<path d="M24.40 427.70l-5.2 4.8 5.2 4.8" stroke="#3c3c3c" stroke-width="2.1" fill="none"/>
<path d="M508.00 427.80l5.2 4.8 -5.2 4.8" stroke="#3c3c3c" stroke-width="2.1" fill="none"/>
<rect x="537.0" y="430.6" width="2.7" height="2.7" fill="#c3c3c3"/><rect x="533.1" y="434.4" width="2.7" height="2.7" fill="#c3c3c3"/><rect x="537.0" y="434.4" width="2.7" height="2.7" fill="#c3c3c3"/><rect x="529.2" y="438.2" width="2.7" height="2.7" fill="#c3c3c3"/><rect x="533.1" y="438.2" width="2.7" height="2.7" fill="#c3c3c3"/><rect x="537.0" y="438.2" width="2.7" height="2.7" fill="#c3c3c3"/>
</svg>
</div>
<div class="a" style="left:414.40px;top:468.00px;width:553.70px;height:453.30px;">
<div class="a" style="left:0.00px;top:0.00px;width:554.80px;height:454.80px;background:#262626;"></div>
<div class="a" style="left:1.00px;top:1.00px;width:7.00px;height:7.00px;background:#fff;"></div>
<div class="a" style="left:546.60px;top:1.00px;width:7.00px;height:7.00px;background:#fff;"></div>
<div class="a" style="left:0.50px;top:0.40px;width:553.90px;height:453.50px;box-sizing:border-box;background:#b4cde8;border:1.1px solid #262626;border-radius:8px 8px 0 0;"></div>
<div class="a" style="left:1.60px;top:1.50px;width:552.20px;height:41.00px;background:linear-gradient(#8fadd0 0%,#a3bddc 45%,#b7cfe9 100%);border-radius:7px 7px 0 0;box-shadow:inset 1px 1px 0 rgba(255,255,255,.6),inset -1px 0 0 rgba(255,255,255,.4);"></div>
<svg style="left:13.4px;top:16.2px" width="18" height="19" viewBox="0 0 18 19"><path d="M1.2 0.8H10.4L15.8 6.2V17H1.2z" fill="#f6f7fa" stroke="#d2d5da" stroke-width="0.9"/><path d="M10.4 0.8V6.2H15.8z" fill="#fff" stroke="#cfd2d8" stroke-width="0.8"/><path d="M0.8 17.6H16.2" stroke="#a9a9a9" stroke-width="1.1"/><path d="M0.9 2V17" stroke="#c4c4c8" stroke-width="0.8"/></svg>
<span id="t44" class="t" style="left:42.00px;top:18.16px;font-size:18.00px;line-height:18.00px;color:#000;font-family:'Liberation Sans', sans-serif;letter-spacing:3.369px;">==</span>
<span id="t45" class="t" style="left:68.40px;top:18.16px;font-size:18.00px;line-height:18.00px;color:#000;font-family:'Liberation Sans', sans-serif;letter-spacing:-0.262px;">PARTSMACRO</span>
<span id="t46" class="t" style="left:192.40px;top:18.16px;font-size:18.00px;line-height:18.00px;color:#000;font-family:'Liberation Sans', sans-serif;letter-spacing:2.569px;">++</span>
<span id="t47" class="t" style="left:218.20px;top:18.16px;font-size:18.00px;line-height:18.00px;color:#000;font-family:'Liberation Sans', sans-serif;letter-spacing:-0.537px;">DRIVES&amp;EFS#DRIVE...</span>
<svg style="left:409.40px;top:12.1px" width="44" height="25"><defs><linearGradient id="bg0a" x1="0" y1="0" x2="0" y2="1"><stop offset="0" stop-color="#b7cbe4"/><stop offset=".46" stop-color="#abc2de"/><stop offset=".5" stop-color="#96b1d3"/><stop offset="1" stop-color="#a4bddb"/></linearGradient></defs><rect x="0.7" y="0.7" width="41.8" height="23.2" rx="3" fill="url(#bg0a)" stroke="#5d7ca5" stroke-width="1.4"/><rect x="1.9" y="1.9" width="39.4" height="20.8" rx="2" fill="none" stroke="rgba(255,255,255,.5)" stroke-width="1"/></svg>
<svg style="left:421.3px;top:21.9px" width="20" height="8"><rect x="1" y="1" width="16.4" height="4.9" rx="1.2" fill="#fcfcfc" stroke="#444a5e" stroke-width="1.2"/></svg>
<svg style="left:455.00px;top:12.1px" width="44" height="25"><defs><linearGradient id="bg1a" x1="0" y1="0" x2="0" y2="1"><stop offset="0" stop-color="#b7cbe4"/><stop offset=".46" stop-color="#abc2de"/><stop offset=".5" stop-color="#96b1d3"/><stop offset="1" stop-color="#a4bddb"/></linearGradient></defs><rect x="0.7" y="0.7" width="41.8" height="23.2" rx="3" fill="url(#bg1a)" stroke="#5d7ca5" stroke-width="1.4"/><rect x="1.9" y="1.9" width="39.4" height="20.8" rx="2" fill="none" stroke="rgba(255,255,255,.5)" stroke-width="1"/></svg>
<svg style="left:466.5px;top:15.9px" width="20" height="17"><rect x="1.1" y="1.1" width="16.6" height="14" rx="1.4" fill="#fbfbfb" stroke="#444a5e" stroke-width="1.2"/><rect x="5.1" y="5.0" width="8.4" height="5.8" fill="#a0b8d6" stroke="#444a5e" stroke-width="1.2"/></svg>
<svg style="left:500.10px;top:12.1px" width="44" height="25"><defs><linearGradient id="bg2a" x1="0" y1="0" x2="0" y2="1"><stop offset="0" stop-color="#e9b0a3"/><stop offset=".46" stop-color="#d9796a"/><stop offset=".5" stop-color="#c24a32"/><stop offset="1" stop-color="#cd5c43"/></linearGradient></defs><rect x="0.7" y="0.7" width="41.8" height="23.2" rx="3" fill="url(#bg2a)" stroke="#632c2c" stroke-width="1.4"/><rect x="1.9" y="1.9" width="39.4" height="20.8" rx="2" fill="none" stroke="rgba(255,255,255,.5)" stroke-width="1"/></svg>
<svg style="left:511.5px;top:15.6px" width="20" height="18"><path d="M2.6 2.7L16.8 15.3M16.8 2.7L2.6 15.3" stroke="#444a5e" stroke-width="5.8" stroke-linecap="butt" fill="none"/><path d="M3.4 3.4L16.0 14.6M16.0 3.4L3.4 14.6" stroke="#fbfbfb" stroke-width="3.6" stroke-linecap="butt" fill="none"/></svg>
<div class="a" style="left:10.20px;top:40.60px;width:533.80px;height:405.00px;box-sizing:border-box;background:#f0f0f0;border-top:2.6px solid #686868;border-left:1.6px solid #686868;border-right:1.1px solid #fff;border-bottom:1.1px solid #fff;"></div>
<div class="a" style="left:11.80px;top:43.00px;width:510.60px;height:379.20px;box-sizing:border-box;background:#fff;"></div>
<div class="a" style="left:13.60px;top:43.20px;width:508.80px;height:379.00px;box-sizing:border-box;background:#fff;border-top:none;border-left:1.2px solid #9d9d9d;"></div>
<svg style="left:14.60px;top:43.00px;overflow:hidden;background:#fff" width="508" height="379" viewBox="429 511 508 379">
<path d="M474.40 0.00V2000" stroke="#ff0d0d" stroke-width="1.3" stroke-dasharray="4 3.4" fill="none"/>
<path d="M739.70 0.00V2000" stroke="#ff0d0d" stroke-width="1.3" stroke-dasharray="4 3.4" fill="none"/>
<path d="M599.70 510.60V576.40M599.70 606.00V686.40M599.70 702.40V835.80M599.70 514.00l3.00 -3.00M614.30 517.90V576.40M614.30 606.00V686.40M614.30 702.40V835.80M614.60 520.50l4.30 -2.80M614.70 518.20h-4.90M629.40 525.50V576.40M629.40 606.00V686.40M629.40 702.40V835.80M629.70 528.10l4.30 -2.80M629.80 525.80h-4.90M643.80 539.40V2000M644.10 542.00l4.30 -2.80M644.20 539.70h-4.90" stroke="#ff0d0d" stroke-width="1.3" fill="none"/>
<path d="M629.40 862.80V2000" stroke="#ff0d0d" stroke-width="1.3" fill="none"/>
<path d="M596.90 632.50l5.00 4.60M611.50 632.50l5.00 4.60M626.60 632.50l5.00 4.60" stroke="#ff0d0d" stroke-width="1.1" fill="none"/>
<text x="602.70" y="629.90" font-size="2.70" fill="#ff2a0a" text-anchor="start" font-weight="bold" textLength="3.20" lengthAdjust="spacingAndGlyphs" font-family="Liberation Sans,sans-serif">BK</text>
<text x="602.70" y="632.90" font-size="2.70" fill="#ff2a0a" text-anchor="start" font-weight="bold" textLength="10.40" lengthAdjust="spacingAndGlyphs" font-family="Liberation Sans,sans-serif">1,5 mm²</text>
<text x="617.30" y="629.90" font-size="2.70" fill="#ff2a0a" text-anchor="start" font-weight="bold" textLength="3.20" lengthAdjust="spacingAndGlyphs" font-family="Liberation Sans,sans-serif">BK</text>
<text x="617.30" y="632.90" font-size="2.70" fill="#ff2a0a" text-anchor="start" font-weight="bold" textLength="10.40" lengthAdjust="spacingAndGlyphs" font-family="Liberation Sans,sans-serif">1,5 mm²</text>
<text x="632.40" y="629.90" font-size="2.70" fill="#ff2a0a" text-anchor="start" font-weight="bold" textLength="3.20" lengthAdjust="spacingAndGlyphs" font-family="Liberation Sans,sans-serif">BK</text>
<text x="632.40" y="632.90" font-size="2.70" fill="#ff2a0a" text-anchor="start" font-weight="bold" textLength="10.40" lengthAdjust="spacingAndGlyphs" font-family="Liberation Sans,sans-serif">1,5 mm²</text>
<path d="M596.90 759.00l5.00 4.60M611.50 759.00l5.00 4.60M626.60 759.00l5.00 4.60" stroke="#ff0d0d" stroke-width="1.1" fill="none"/>
<text x="602.70" y="756.40" font-size="2.70" fill="#ff2a0a" text-anchor="start" font-weight="bold" textLength="3.20" lengthAdjust="spacingAndGlyphs" font-family="Liberation Sans,sans-serif">BK</text>
<text x="602.70" y="759.40" font-size="2.70" fill="#ff2a0a" text-anchor="start" font-weight="bold" textLength="10.40" lengthAdjust="spacingAndGlyphs" font-family="Liberation Sans,sans-serif">1,5 mm²</text>
<text x="617.30" y="756.40" font-size="2.70" fill="#ff2a0a" text-anchor="start" font-weight="bold" textLength="3.20" lengthAdjust="spacingAndGlyphs" font-family="Liberation Sans,sans-serif">BK</text>
<text x="617.30" y="759.40" font-size="2.70" fill="#ff2a0a" text-anchor="start" font-weight="bold" textLength="10.40" lengthAdjust="spacingAndGlyphs" font-family="Liberation Sans,sans-serif">1,5 mm²</text>
<text x="632.40" y="756.40" font-size="2.70" fill="#ff2a0a" text-anchor="start" font-weight="bold" textLength="3.20" lengthAdjust="spacingAndGlyphs" font-family="Liberation Sans,sans-serif">BK</text>
<text x="632.40" y="759.40" font-size="2.70" fill="#ff2a0a" text-anchor="start" font-weight="bold" textLength="10.40" lengthAdjust="spacingAndGlyphs" font-family="Liberation Sans,sans-serif">1,5 mm²</text>
<path d="M678.10 670.00l5.00 4.60M692.90 670.00l5.00 4.60M708.10 670.00l5.00 4.60" stroke="#ff0d0d" stroke-width="1.1" fill="none"/>
<text x="683.90" y="667.40" font-size="2.70" fill="#ff2a0a" text-anchor="start" font-weight="bold" textLength="3.20" lengthAdjust="spacingAndGlyphs" font-family="Liberation Sans,sans-serif">BK</text>
<text x="683.90" y="670.40" font-size="2.70" fill="#ff2a0a" text-anchor="start" font-weight="bold" textLength="10.40" lengthAdjust="spacingAndGlyphs" font-family="Liberation Sans,sans-serif">1,5 mm²</text>
<text x="698.70" y="667.40" font-size="2.70" fill="#ff2a0a" text-anchor="start" font-weight="bold" textLength="3.20" lengthAdjust="spacingAndGlyphs" font-family="Liberation Sans,sans-serif">BK</text>
<text x="698.70" y="670.40" font-size="2.70" fill="#ff2a0a" text-anchor="start" font-weight="bold" textLength="10.40" lengthAdjust="spacingAndGlyphs" font-family="Liberation Sans,sans-serif">1,5 mm²</text>
<text x="713.90" y="667.40" font-size="2.70" fill="#ff2a0a" text-anchor="start" font-weight="bold" textLength="3.20" lengthAdjust="spacingAndGlyphs" font-family="Liberation Sans,sans-serif">BK</text>
<text x="713.90" y="670.40" font-size="2.70" fill="#ff2a0a" text-anchor="start" font-weight="bold" textLength="10.40" lengthAdjust="spacingAndGlyphs" font-family="Liberation Sans,sans-serif">1,5 mm²</text>
<path d="M678.10 715.20l5.00 4.60M692.90 715.20l5.00 4.60M708.10 715.20l5.00 4.60" stroke="#ff0d0d" stroke-width="1.1" fill="none"/>
<text x="683.90" y="712.60" font-size="2.70" fill="#ff2a0a" text-anchor="start" font-weight="bold" textLength="3.20" lengthAdjust="spacingAndGlyphs" font-family="Liberation Sans,sans-serif">BK</text>
<text x="683.90" y="715.60" font-size="2.70" fill="#ff2a0a" text-anchor="start" font-weight="bold" textLength="10.40" lengthAdjust="spacingAndGlyphs" font-family="Liberation Sans,sans-serif">1,5 mm²</text>
<text x="698.70" y="712.60" font-size="2.70" fill="#ff2a0a" text-anchor="start" font-weight="bold" textLength="3.20" lengthAdjust="spacingAndGlyphs" font-family="Liberation Sans,sans-serif">BK</text>
<text x="698.70" y="715.60" font-size="2.70" fill="#ff2a0a" text-anchor="start" font-weight="bold" textLength="10.40" lengthAdjust="spacingAndGlyphs" font-family="Liberation Sans,sans-serif">1,5 mm²</text>
<text x="713.90" y="712.60" font-size="2.70" fill="#ff2a0a" text-anchor="start" font-weight="bold" textLength="3.20" lengthAdjust="spacingAndGlyphs" font-family="Liberation Sans,sans-serif">BK</text>
<text x="713.90" y="715.60" font-size="2.70" fill="#ff2a0a" text-anchor="start" font-weight="bold" textLength="10.40" lengthAdjust="spacingAndGlyphs" font-family="Liberation Sans,sans-serif">1,5 mm²</text>
<path d="M599.70 669.00L603.30 665.60H680.90V686.40M614.30 661.70L617.90 658.30H695.70V686.40M629.40 654.40L633.00 651.00H710.90V686.40M680.90 702.40V725.50H632.80L629.40 722.20M695.70 702.40V732.50H617.70L614.30 729.20M710.90 702.40V739.50H603.10L599.70 736.20" stroke="#ff0d0d" stroke-width="1.3" fill="none"/>
<path d="M592.20 588.40H636.80V603.80H592.20ZM592.20 596.40H636.80M606.70 588.40V603.80M621.60 588.40V603.80M599.70 588.40V589.60H603.90V594.20H599.70V596.40M594.50 578.80L599.70 588.40M599.70 576.40V580.40M599.70 603.80V606.00M614.30 588.40V589.60H618.50V594.20H614.30V596.40M609.10 578.80L614.30 588.40M614.30 576.40V580.40M614.30 603.80V606.00M629.40 588.40V589.60H633.60V594.20H629.40V596.40M624.20 578.80L629.40 588.40M629.40 576.40V580.40M629.40 603.80V606.00" stroke="#1414ff" stroke-width="1.2" fill="none"/>
<path d="M597.40 597.70v4.40" stroke="#5a4cff" stroke-width="1.10" stroke-dasharray="1.20 0.80" fill="none"/>
<path d="M598.80 597.80l3.40 2.10l-3.40 2.10z" fill="#3a3cff"/>
<path d="M612.00 597.70v4.40" stroke="#5a4cff" stroke-width="1.10" stroke-dasharray="1.20 0.80" fill="none"/>
<path d="M613.40 597.80l3.40 2.10l-3.40 2.10z" fill="#3a3cff"/>
<path d="M627.10 597.70v4.40" stroke="#5a4cff" stroke-width="1.10" stroke-dasharray="1.20 0.80" fill="none"/>
<path d="M628.50 597.80l3.40 2.10l-3.40 2.10z" fill="#3a3cff"/>
<path d="M589.30 584.50H591.70M596.10 584.50H599.30M602.70 584.50H607.50M610.70 584.50H614.30M617.50 584.50H622.30M625.70 584.50H628.10" stroke="#1414ff" stroke-width="1.2" fill="none"/>
<path d="M592.20 592.30H584.70V599.80H592.20" stroke="#1414ff" stroke-width="1.2" stroke-dasharray="2.60 1.50" fill="none"/>
<path d="M580.90 580.50h7.90v7.90h-7.90zM584.70 578.50v11.20M577.30 584.50h12.60M577.30 582.50v4.00" stroke="#1414ff" stroke-width="1.2" fill="none"/>
<text x="575.70" y="586.40" font-size="5.00" fill="#1414ff" text-anchor="end" font-weight="normal" textLength="9.00" lengthAdjust="spacingAndGlyphs" font-family="Liberation Sans,sans-serif">-Q5</text>
<text x="600.60" y="577.40" font-size="3.20" fill="#141478" text-anchor="start" font-weight="bold" font-family="Liberation Sans,sans-serif">1</text>
<text x="600.60" y="608.40" font-size="3.20" fill="#141478" text-anchor="start" font-weight="bold" font-family="Liberation Sans,sans-serif">2</text>
<text x="615.20" y="577.40" font-size="3.20" fill="#141478" text-anchor="start" font-weight="bold" font-family="Liberation Sans,sans-serif">3</text>
<text x="615.20" y="608.40" font-size="3.20" fill="#141478" text-anchor="start" font-weight="bold" font-family="Liberation Sans,sans-serif">4</text>
<text x="630.30" y="577.40" font-size="3.20" fill="#141478" text-anchor="start" font-weight="bold" font-family="Liberation Sans,sans-serif">5</text>
<text x="630.30" y="608.40" font-size="3.20" fill="#141478" text-anchor="start" font-weight="bold" font-family="Liberation Sans,sans-serif">6</text>
<ellipse cx="599.10" cy="689.10" rx="1.15" ry="1.90" stroke="#1414ff" stroke-width="1.2" fill="none"/>
<ellipse cx="613.70" cy="689.10" rx="1.15" ry="1.90" stroke="#1414ff" stroke-width="1.2" fill="none"/>
<ellipse cx="628.80" cy="689.10" rx="1.15" ry="1.90" stroke="#1414ff" stroke-width="1.2" fill="none"/>
<path d="M594.40 689.60L599.70 698.70V702.40M609.00 689.60L614.30 698.70V702.40M624.10 689.60L629.40 698.70V702.40" stroke="#1414ff" stroke-width="1.2" fill="none"/>
<text x="591.10" y="695.60" font-size="4.60" fill="#1414ff" text-anchor="end" font-weight="normal" textLength="8.00" lengthAdjust="spacingAndGlyphs" font-family="Liberation Sans,sans-serif">-K7</text>
<text x="601.10" y="688.00" font-size="3.20" fill="#141478" text-anchor="start" font-weight="bold" font-family="Liberation Sans,sans-serif">1</text>
<text x="600.70" y="703.00" font-size="3.20" fill="#141478" text-anchor="start" font-weight="bold" font-family="Liberation Sans,sans-serif">2</text>
<text x="615.70" y="688.00" font-size="3.20" fill="#141478" text-anchor="start" font-weight="bold" font-family="Liberation Sans,sans-serif">3</text>
<text x="615.30" y="703.00" font-size="3.20" fill="#141478" text-anchor="start" font-weight="bold" font-family="Liberation Sans,sans-serif">4</text>
<text x="630.80" y="688.00" font-size="3.20" fill="#141478" text-anchor="start" font-weight="bold" font-family="Liberation Sans,sans-serif">5</text>
<text x="630.40" y="703.00" font-size="3.20" fill="#141478" text-anchor="start" font-weight="bold" font-family="Liberation Sans,sans-serif">6</text>
<ellipse cx="680.30" cy="689.10" rx="1.15" ry="1.90" stroke="#1414ff" stroke-width="1.2" fill="none"/>
<ellipse cx="695.10" cy="689.10" rx="1.15" ry="1.90" stroke="#1414ff" stroke-width="1.2" fill="none"/>
<ellipse cx="710.30" cy="689.10" rx="1.15" ry="1.90" stroke="#1414ff" stroke-width="1.2" fill="none"/>
<path d="M675.60 689.60L680.90 698.70V702.40M690.40 689.60L695.70 698.70V702.40M705.60 689.60L710.90 698.70V702.40" stroke="#1414ff" stroke-width="1.2" fill="none"/>
<text x="672.30" y="695.60" font-size="4.60" fill="#1414ff" text-anchor="end" font-weight="normal" textLength="8.00" lengthAdjust="spacingAndGlyphs" font-family="Liberation Sans,sans-serif">-K7</text>
<text x="682.30" y="688.00" font-size="3.20" fill="#141478" text-anchor="start" font-weight="bold" font-family="Liberation Sans,sans-serif">1</text>
<text x="681.90" y="703.00" font-size="3.20" fill="#141478" text-anchor="start" font-weight="bold" font-family="Liberation Sans,sans-serif">2</text>
<text x="697.10" y="688.00" font-size="3.20" fill="#141478" text-anchor="start" font-weight="bold" font-family="Liberation Sans,sans-serif">3</text>
<text x="696.70" y="703.00" font-size="3.20" fill="#141478" text-anchor="start" font-weight="bold" font-family="Liberation Sans,sans-serif">4</text>
<text x="712.30" y="688.00" font-size="3.20" fill="#141478" text-anchor="start" font-weight="bold" font-family="Liberation Sans,sans-serif">5</text>
<text x="711.90" y="703.00" font-size="3.20" fill="#141478" text-anchor="start" font-weight="bold" font-family="Liberation Sans,sans-serif">6</text>
<circle cx="599.70" cy="791.40" r="1.55" fill="#fff" stroke="#1414ff" stroke-width="1.2"/>
<text x="601.90" y="792.80" font-size="3.40" fill="#141478" text-anchor="start" font-weight="bold" font-family="Liberation Sans,sans-serif">1</text>
<circle cx="614.30" cy="791.40" r="1.55" fill="#fff" stroke="#1414ff" stroke-width="1.2"/>
<text x="616.50" y="792.80" font-size="3.40" fill="#141478" text-anchor="start" font-weight="bold" font-family="Liberation Sans,sans-serif">2</text>
<circle cx="629.40" cy="791.40" r="1.55" fill="#fff" stroke="#1414ff" stroke-width="1.2"/>
<text x="631.60" y="792.80" font-size="3.40" fill="#141478" text-anchor="start" font-weight="bold" font-family="Liberation Sans,sans-serif">3</text>
<circle cx="643.80" cy="791.40" r="1.55" fill="#fff" stroke="#1414ff" stroke-width="1.2"/>
<text x="646.00" y="792.80" font-size="3.40" fill="#141478" text-anchor="start" font-weight="bold" font-family="Liberation Sans,sans-serif">4</text>
<text x="596.10" y="793.00" font-size="4.60" fill="#1414ff" text-anchor="end" font-weight="normal" textLength="7.20" lengthAdjust="spacingAndGlyphs" font-family="Liberation Sans,sans-serif">-X1</text>
<path d="M569.50 813.60H666.90" stroke="#1414ff" stroke-width="1.4" fill="none"/>
<text x="569.30" y="812.40" font-size="4.80" fill="#1414ff" text-anchor="end" font-weight="normal" textLength="12.40" lengthAdjust="spacingAndGlyphs" font-family="Liberation Sans,sans-serif">-W73</text>
<text x="602.30" y="808.40" font-size="2.80" fill="#ff2a0a" text-anchor="start" font-weight="bold" textLength="3.40" lengthAdjust="spacingAndGlyphs" font-family="Liberation Sans,sans-serif">BN</text>
<text x="602.30" y="811.80" font-size="2.80" fill="#ff2a0a" text-anchor="start" font-weight="bold" textLength="3.20" lengthAdjust="spacingAndGlyphs" font-family="Liberation Sans,sans-serif">1,5</text>
<text x="616.90" y="808.40" font-size="2.80" fill="#ff2a0a" text-anchor="start" font-weight="bold" textLength="3.40" lengthAdjust="spacingAndGlyphs" font-family="Liberation Sans,sans-serif">BU</text>
<text x="616.90" y="811.80" font-size="2.80" fill="#ff2a0a" text-anchor="start" font-weight="bold" textLength="3.20" lengthAdjust="spacingAndGlyphs" font-family="Liberation Sans,sans-serif">1,5</text>
<text x="632.00" y="808.40" font-size="2.80" fill="#ff2a0a" text-anchor="start" font-weight="bold" textLength="3.40" lengthAdjust="spacingAndGlyphs" font-family="Liberation Sans,sans-serif">BK</text>
<text x="632.00" y="811.80" font-size="2.80" fill="#ff2a0a" text-anchor="start" font-weight="bold" textLength="3.20" lengthAdjust="spacingAndGlyphs" font-family="Liberation Sans,sans-serif">1,5</text>
<text x="646.40" y="808.40" font-size="2.80" fill="#ff2a0a" text-anchor="start" font-weight="bold" textLength="6.00" lengthAdjust="spacingAndGlyphs" font-family="Liberation Sans,sans-serif">GNYE</text>
<text x="646.40" y="811.80" font-size="2.80" fill="#ff2a0a" text-anchor="start" font-weight="bold" textLength="3.20" lengthAdjust="spacingAndGlyphs" font-family="Liberation Sans,sans-serif">1,5</text>
<path d="M597.30 811.40l4.60 4.40M611.90 811.40l4.60 4.40M627.00 811.40l4.60 4.40M641.40 811.40l4.60 4.40" stroke="#ff0d0d" stroke-width="1.1" fill="none"/>
<text x="578.00" y="828.60" font-size="4.90" fill="#1414ff" text-anchor="end" font-weight="normal" textLength="49.60" lengthAdjust="spacingAndGlyphs" font-family="Liberation Sans,sans-serif">#&lt;DRIVE_POWER&gt;</text>
<text x="578.50" y="835.80" font-size="4.90" fill="#1414ff" text-anchor="end" font-weight="normal" textLength="11.60" lengthAdjust="spacingAndGlyphs" font-family="Liberation Sans,sans-serif">Lapp</text>
<path d="M584.70 828.20V836.00M580.80 833.00Q581.30 836.00 584.70 836.00Q588.10 836.00 588.60 832.40" stroke="#ff0d0d" stroke-width="1.2" fill="none"/>
<circle cx="584.70" cy="827.70" r="0.70" fill="none" stroke="#ff0d0d" stroke-width="0.9"/>
<path d="M524.90 849.20V857.00M521.00 854.00Q521.50 857.00 524.90 857.00Q528.30 857.00 528.80 853.40" stroke="#ff0d0d" stroke-width="1.2" fill="none"/>
<circle cx="524.90" cy="848.70" r="0.70" fill="none" stroke="#ff0d0d" stroke-width="0.9"/>
<circle cx="614.50" cy="850.30" r="10.90" fill="#fff" stroke="#1414ff" stroke-width="1.3"/>
<path d="M599.70 835.80V840.00L605.50 843.80M614.30 835.80V839.40M629.40 835.80V840.00L623.50 843.80M623.90 858.00L629.40 863.00" stroke="#1414ff" stroke-width="1.2" fill="none"/>
<text x="614.30" y="849.00" font-size="6.40" fill="#3c3cff" text-anchor="middle" font-weight="normal" font-family="Liberation Sans,sans-serif">M</text>
<text x="612.90" y="857.00" font-size="6.40" fill="#3c3cff" text-anchor="middle" font-weight="normal" font-family="Liberation Sans,sans-serif">3~</text>
<text x="600.50" y="837.00" font-size="3.00" fill="#141478" text-anchor="start" font-weight="bold" font-family="Liberation Sans,sans-serif">U1</text>
<text x="615.10" y="837.00" font-size="3.00" fill="#141478" text-anchor="start" font-weight="bold" font-family="Liberation Sans,sans-serif">V1</text>
<text x="630.30" y="837.00" font-size="3.00" fill="#141478" text-anchor="start" font-weight="bold" font-family="Liberation Sans,sans-serif">W1</text>
<text x="631.10" y="865.60" font-size="3.00" fill="#000" text-anchor="start" font-weight="bold" font-family="Liberation Sans,sans-serif">PE</text>
<text x="592.30" y="852.00" font-size="4.80" fill="#1414ff" text-anchor="end" font-weight="normal" textLength="8.80" lengthAdjust="spacingAndGlyphs" font-family="Liberation Sans,sans-serif">-M3</text>
<text x="592.30" y="857.30" font-size="3.20" fill="#000" text-anchor="end" font-weight="bold" textLength="27.40" lengthAdjust="spacingAndGlyphs" font-family="Liberation Sans,sans-serif">Standardmotor</text>
<text x="639.20" y="506.20" font-size="2.9" font-weight="bold" fill="#ff2a0a" textLength="3.6" lengthAdjust="spacingAndGlyphs" font-family="Liberation Sans,sans-serif">BN</text>
<text x="639.20" y="509.80" font-size="2.9" font-weight="bold" fill="#ff2a0a" textLength="3.4" lengthAdjust="spacingAndGlyphs" font-family="Liberation Sans,sans-serif">1,5</text>
<text x="646.20" y="514.20" font-size="2.9" font-weight="bold" fill="#ff2a0a" textLength="3.6" lengthAdjust="spacingAndGlyphs" font-family="Liberation Sans,sans-serif">BU</text>
<text x="646.20" y="517.80" font-size="2.9" font-weight="bold" fill="#ff2a0a" textLength="3.4" lengthAdjust="spacingAndGlyphs" font-family="Liberation Sans,sans-serif">1,5</text>
<text x="653.20" y="521.50" font-size="2.9" font-weight="bold" fill="#ff2a0a" textLength="3.6" lengthAdjust="spacingAndGlyphs" font-family="Liberation Sans,sans-serif">BK</text>
<text x="653.20" y="525.10" font-size="2.9" font-weight="bold" fill="#ff2a0a" textLength="3.4" lengthAdjust="spacingAndGlyphs" font-family="Liberation Sans,sans-serif">1,5</text>
<text x="668.00" y="535.90" font-size="2.9" font-weight="bold" fill="#ff2a0a" textLength="6.2" lengthAdjust="spacingAndGlyphs" font-family="Liberation Sans,sans-serif">GNYE</text>
<text x="668.00" y="539.50" font-size="2.9" font-weight="bold" fill="#ff2a0a" textLength="3.4" lengthAdjust="spacingAndGlyphs" font-family="Liberation Sans,sans-serif">1,5</text>
<path d="M634.20 508.50L638.90 513.40M640.80 515.60L646.30 520.70M649.00 523.00L653.70 527.70M664.00 538.20L668.70 542.50" stroke="#ff0d0d" stroke-width="1.1" fill="none"/>
</svg>
<div class="a" style="left:522.40px;top:43.80px;width:20.60px;height:378.40px;background:#f0f0f0;"></div>
<div class="a" style="left:522.90px;top:79.00px;width:18.60px;height:233.00px;background:#cdcdcd;"></div>
<div class="a" style="left:13.80px;top:422.40px;width:508.60px;height:22.20px;background:#f0f0f0;"></div>
<div class="a" style="left:33.60px;top:422.70px;width:303.80px;height:19.50px;background:#cdcdcd;"></div>
<svg style="left:0;top:0" width="553.7" height="453.3">
<path d="M527.60 55.60l4.8 -5.2 4.8 5.2" stroke="#3c3c3c" stroke-width="2.1" fill="none"/>
<path d="M527.60 408.00l4.8 5.2 4.8 -5.2" stroke="#3c3c3c" stroke-width="2.1" fill="none"/>
<path d="M24.40 427.70l-5.2 4.8 5.2 4.8" stroke="#3c3c3c" stroke-width="2.1" fill="none"/>
<path d="M508.00 427.80l5.2 4.8 -5.2 4.8" stroke="#3c3c3c" stroke-width="2.1" fill="none"/>
<rect x="537.0" y="430.6" width="2.7" height="2.7" fill="#c3c3c3"/><rect x="533.1" y="434.4" width="2.7" height="2.7" fill="#c3c3c3"/><rect x="537.0" y="434.4" width="2.7" height="2.7" fill="#c3c3c3"/><rect x="529.2" y="438.2" width="2.7" height="2.7" fill="#c3c3c3"/><rect x="533.1" y="438.2" width="2.7" height="2.7" fill="#c3c3c3"/><rect x="537.0" y="438.2" width="2.7" height="2.7" fill="#c3c3c3"/>
</svg>
</div>
<div class="a" style="left:968.10px;top:468.00px;width:553.70px;height:453.30px;">
<div class="a" style="left:0.00px;top:0.00px;width:554.80px;height:454.80px;background:#565656;"></div>
<div class="a" style="left:1.00px;top:1.00px;width:7.00px;height:7.00px;background:#fff;"></div>
<div class="a" style="left:546.60px;top:1.00px;width:7.00px;height:7.00px;background:#fff;"></div>
<div class="a" style="left:0.50px;top:0.40px;width:553.90px;height:453.50px;box-sizing:border-box;background:#d8e5f3;border:1.1px solid #565656;border-radius:8px 8px 0 0;"></div>
<div class="a" style="left:1.60px;top:1.50px;width:552.20px;height:41.00px;background:linear-gradient(#c1cede 0%,#cbd9e8 45%,#dbe7f4 100%);border-radius:7px 7px 0 0;box-shadow:inset 1px 1px 0 rgba(255,255,255,.6),inset -1px 0 0 rgba(255,255,255,.4);"></div>
<svg style="left:13.4px;top:16.2px" width="18" height="19" viewBox="0 0 18 19"><path d="M1.2 0.8H10.4L15.8 6.2V17H1.2z" fill="#f6f7fa" stroke="#d2d5da" stroke-width="0.9"/><path d="M10.4 0.8V6.2H15.8z" fill="#fff" stroke="#cfd2d8" stroke-width="0.8"/><path d="M0.8 17.6H16.2" stroke="#a9a9a9" stroke-width="1.1"/><path d="M0.9 2V17" stroke="#c4c4c8" stroke-width="0.8"/></svg>
<span id="t48" class="t" style="left:42.00px;top:18.16px;font-size:18.00px;line-height:18.00px;color:#000;font-family:'Liberation Sans', sans-serif;letter-spacing:3.369px;">==</span>
<span id="t49" class="t" style="left:68.40px;top:18.16px;font-size:18.00px;line-height:18.00px;color:#000;font-family:'Liberation Sans', sans-serif;letter-spacing:-0.262px;">PARTSMACRO</span>
<span id="t50" class="t" style="left:192.40px;top:18.16px;font-size:18.00px;line-height:18.00px;color:#000;font-family:'Liberation Sans', sans-serif;letter-spacing:2.569px;">++</span>
<span id="t51" class="t" style="left:218.20px;top:18.16px;font-size:18.00px;line-height:18.00px;color:#000;font-family:'Liberation Sans', sans-serif;letter-spacing:-0.537px;">DRIVES&amp;EFS#DRIVE...</span>
<svg style="left:409.40px;top:12.1px" width="44" height="25"><defs><linearGradient id="bg0i" x1="0" y1="0" x2="0" y2="1"><stop offset="0" stop-color="#ccd8e7"/><stop offset=".5" stop-color="#c6d3e3"/><stop offset="1" stop-color="#c1cfe1"/></linearGradient></defs><rect x="0.7" y="0.7" width="41.8" height="23.2" rx="3" fill="url(#bg0i)" stroke="#8a9dbd" stroke-width="1.4"/><rect x="1.9" y="1.9" width="39.4" height="20.8" rx="2" fill="none" stroke="rgba(255,255,255,.5)" stroke-width="1"/></svg>
<svg style="left:421.3px;top:21.9px" width="20" height="8"><rect x="1" y="1" width="16.4" height="4.9" rx="1.2" fill="#fcfcfc" stroke="#444a5e" stroke-width="1.2"/></svg>
<svg style="left:455.00px;top:12.1px" width="44" height="25"><defs><linearGradient id="bg1i" x1="0" y1="0" x2="0" y2="1"><stop offset="0" stop-color="#ccd8e7"/><stop offset=".5" stop-color="#c6d3e3"/><stop offset="1" stop-color="#c1cfe1"/></linearGradient></defs><rect x="0.7" y="0.7" width="41.8" height="23.2" rx="3" fill="url(#bg1i)" stroke="#8a9dbd" stroke-width="1.4"/><rect x="1.9" y="1.9" width="39.4" height="20.8" rx="2" fill="none" stroke="rgba(255,255,255,.5)" stroke-width="1"/></svg>
<svg style="left:466.5px;top:15.9px" width="20" height="17"><rect x="1.1" y="1.1" width="16.6" height="14" rx="1.4" fill="#fbfbfb" stroke="#444a5e" stroke-width="1.2"/><rect x="5.1" y="5.0" width="8.4" height="5.8" fill="#c6d3e3" stroke="#444a5e" stroke-width="1.2"/></svg>
<svg style="left:500.10px;top:12.1px" width="44" height="25"><defs><linearGradient id="bg2i" x1="0" y1="0" x2="0" y2="1"><stop offset="0" stop-color="#ccd8e7"/><stop offset=".5" stop-color="#c6d3e3"/><stop offset="1" stop-color="#c1cfe1"/></linearGradient></defs><rect x="0.7" y="0.7" width="41.8" height="23.2" rx="3" fill="url(#bg2i)" stroke="#8a9dbd" stroke-width="1.4"/><rect x="1.9" y="1.9" width="39.4" height="20.8" rx="2" fill="none" stroke="rgba(255,255,255,.5)" stroke-width="1"/></svg>
<svg style="left:511.5px;top:15.6px" width="20" height="18"><path d="M2.6 2.7L16.8 15.3M16.8 2.7L2.6 15.3" stroke="#444a5e" stroke-width="5.8" stroke-linecap="butt" fill="none"/><path d="M3.4 3.4L16.0 14.6M16.0 3.4L3.4 14.6" stroke="#fbfbfb" stroke-width="3.6" stroke-linecap="butt" fill="none"/></svg>
<div class="a" style="left:10.20px;top:40.60px;width:533.80px;height:405.00px;box-sizing:border-box;background:#f0f0f0;border-top:2.6px solid #686868;border-left:1.6px solid #686868;border-right:1.1px solid #fff;border-bottom:1.1px solid #fff;"></div>
<div class="a" style="left:11.80px;top:43.00px;width:510.60px;height:379.20px;box-sizing:border-box;background:#fff;"></div>
<div class="a" style="left:13.60px;top:43.20px;width:508.80px;height:379.00px;box-sizing:border-box;background:#fff;border-top:none;border-left:1.2px solid #9d9d9d;"></div>
<svg style="left:14.90px;top:43.00px;overflow:hidden;background:#fff" width="507" height="379" viewBox="983 511 507 379">
<path d="M1023.10 515.30V2000" stroke="#ff0d0d" stroke-width="1.3" stroke-dasharray="4 3.4" fill="none"/>
<path d="M1244.20 515.30V2000" stroke="#ff0d0d" stroke-width="1.3" stroke-dasharray="4 3.4" fill="none"/>
<path d="M1148.50 523.40V589.00M1148.50 618.60V699.00M1148.50 715.00V848.40M1148.80 526.00l4.30 -2.80M1148.90 523.70h-4.90M1163.10 530.20V589.00M1163.10 618.60V699.00M1163.10 715.00V848.40M1163.40 532.80l4.30 -2.80M1163.50 530.50h-4.90M1178.20 537.20V589.00M1178.20 618.60V699.00M1178.20 715.00V848.40M1178.50 539.80l4.30 -2.80M1178.60 537.50h-4.90M1192.60 551.50V2000M1192.90 554.10l4.30 -2.80M1193.00 551.80h-4.90" stroke="#ff0d0d" stroke-width="1.3" fill="none"/>
<path d="M1178.20 875.40V2000" stroke="#ff0d0d" stroke-width="1.3" fill="none"/>
<path d="M1145.70 645.10l5.00 4.60M1160.30 645.10l5.00 4.60M1175.40 645.10l5.00 4.60" stroke="#ff0d0d" stroke-width="1.1" fill="none"/>
<text x="1151.50" y="642.50" font-size="2.70" fill="#ff2a0a" text-anchor="start" font-weight="bold" textLength="3.20" lengthAdjust="spacingAndGlyphs" font-family="Liberation Sans,sans-serif">BK</text>
<text x="1151.50" y="645.50" font-size="2.70" fill="#ff2a0a" text-anchor="start" font-weight="bold" textLength="10.40" lengthAdjust="spacingAndGlyphs" font-family="Liberation Sans,sans-serif">1,5 mm²</text>
<text x="1166.10" y="642.50" font-size="2.70" fill="#ff2a0a" text-anchor="start" font-weight="bold" textLength="3.20" lengthAdjust="spacingAndGlyphs" font-family="Liberation Sans,sans-serif">BK</text>
<text x="1166.10" y="645.50" font-size="2.70" fill="#ff2a0a" text-anchor="start" font-weight="bold" textLength="10.40" lengthAdjust="spacingAndGlyphs" font-family="Liberation Sans,sans-serif">1,5 mm²</text>
<text x="1181.20" y="642.50" font-size="2.70" fill="#ff2a0a" text-anchor="start" font-weight="bold" textLength="3.20" lengthAdjust="spacingAndGlyphs" font-family="Liberation Sans,sans-serif">BK</text>
<text x="1181.20" y="645.50" font-size="2.70" fill="#ff2a0a" text-anchor="start" font-weight="bold" textLength="10.40" lengthAdjust="spacingAndGlyphs" font-family="Liberation Sans,sans-serif">1,5 mm²</text>
<path d="M1145.70 771.60l5.00 4.60M1160.30 771.60l5.00 4.60M1175.40 771.60l5.00 4.60" stroke="#ff0d0d" stroke-width="1.1" fill="none"/>
<text x="1151.50" y="769.00" font-size="2.70" fill="#ff2a0a" text-anchor="start" font-weight="bold" textLength="3.20" lengthAdjust="spacingAndGlyphs" font-family="Liberation Sans,sans-serif">BK</text>
<text x="1151.50" y="772.00" font-size="2.70" fill="#ff2a0a" text-anchor="start" font-weight="bold" textLength="10.40" lengthAdjust="spacingAndGlyphs" font-family="Liberation Sans,sans-serif">1,5 mm²</text>
<text x="1166.10" y="769.00" font-size="2.70" fill="#ff2a0a" text-anchor="start" font-weight="bold" textLength="3.20" lengthAdjust="spacingAndGlyphs" font-family="Liberation Sans,sans-serif">BK</text>
<text x="1166.10" y="772.00" font-size="2.70" fill="#ff2a0a" text-anchor="start" font-weight="bold" textLength="10.40" lengthAdjust="spacingAndGlyphs" font-family="Liberation Sans,sans-serif">1,5 mm²</text>
<text x="1181.20" y="769.00" font-size="2.70" fill="#ff2a0a" text-anchor="start" font-weight="bold" textLength="3.20" lengthAdjust="spacingAndGlyphs" font-family="Liberation Sans,sans-serif">BK</text>
<text x="1181.20" y="772.00" font-size="2.70" fill="#ff2a0a" text-anchor="start" font-weight="bold" textLength="10.40" lengthAdjust="spacingAndGlyphs" font-family="Liberation Sans,sans-serif">1,5 mm²</text>
<path d="M1141.00 601.00H1185.60V616.40H1141.00ZM1141.00 609.00H1185.60M1155.50 601.00V616.40M1170.40 601.00V616.40M1148.50 601.00V602.20H1152.70V606.80H1148.50V609.00M1143.30 591.40L1148.50 601.00M1148.50 589.00V593.00M1148.50 616.40V618.60M1163.10 601.00V602.20H1167.30V606.80H1163.10V609.00M1157.90 591.40L1163.10 601.00M1163.10 589.00V593.00M1163.10 616.40V618.60M1178.20 601.00V602.20H1182.40V606.80H1178.20V609.00M1173.00 591.40L1178.20 601.00M1178.20 589.00V593.00M1178.20 616.40V618.60" stroke="#1414ff" stroke-width="1.2" fill="none"/>
<path d="M1146.20 610.30v4.40" stroke="#5a4cff" stroke-width="1.10" stroke-dasharray="1.20 0.80" fill="none"/>
<path d="M1147.60 610.40l3.40 2.10l-3.40 2.10z" fill="#3a3cff"/>
<path d="M1160.80 610.30v4.40" stroke="#5a4cff" stroke-width="1.10" stroke-dasharray="1.20 0.80" fill="none"/>
<path d="M1162.20 610.40l3.40 2.10l-3.40 2.10z" fill="#3a3cff"/>
<path d="M1175.90 610.30v4.40" stroke="#5a4cff" stroke-width="1.10" stroke-dasharray="1.20 0.80" fill="none"/>
<path d="M1177.30 610.40l3.40 2.10l-3.40 2.10z" fill="#3a3cff"/>
<path d="M1138.10 597.10H1140.50M1144.90 597.10H1148.10M1151.50 597.10H1156.30M1159.50 597.10H1163.10M1166.30 597.10H1171.10M1174.50 597.10H1176.90" stroke="#1414ff" stroke-width="1.2" fill="none"/>
<path d="M1141.00 604.90H1133.50V612.40H1141.00" stroke="#1414ff" stroke-width="1.2" stroke-dasharray="2.60 1.50" fill="none"/>
<path d="M1129.70 593.10h7.90v7.90h-7.90zM1133.50 591.10v11.20M1126.10 597.10h12.60M1126.10 595.10v4.00" stroke="#1414ff" stroke-width="1.2" fill="none"/>
<text x="1124.50" y="599.00" font-size="5.00" fill="#1414ff" text-anchor="end" font-weight="normal" textLength="9.00" lengthAdjust="spacingAndGlyphs" font-family="Liberation Sans,sans-serif">-Q5</text>
<text x="1149.40" y="590.00" font-size="3.20" fill="#141478" text-anchor="start" font-weight="bold" font-family="Liberation Sans,sans-serif">1</text>
<text x="1149.40" y="621.00" font-size="3.20" fill="#141478" text-anchor="start" font-weight="bold" font-family="Liberation Sans,sans-serif">2</text>
<text x="1164.00" y="590.00" font-size="3.20" fill="#141478" text-anchor="start" font-weight="bold" font-family="Liberation Sans,sans-serif">3</text>
<text x="1164.00" y="621.00" font-size="3.20" fill="#141478" text-anchor="start" font-weight="bold" font-family="Liberation Sans,sans-serif">4</text>
<text x="1179.10" y="590.00" font-size="3.20" fill="#141478" text-anchor="start" font-weight="bold" font-family="Liberation Sans,sans-serif">5</text>
<text x="1179.10" y="621.00" font-size="3.20" fill="#141478" text-anchor="start" font-weight="bold" font-family="Liberation Sans,sans-serif">6</text>
<ellipse cx="1147.90" cy="701.70" rx="1.15" ry="1.90" stroke="#1414ff" stroke-width="1.2" fill="none"/>
<ellipse cx="1162.50" cy="701.70" rx="1.15" ry="1.90" stroke="#1414ff" stroke-width="1.2" fill="none"/>
<ellipse cx="1177.60" cy="701.70" rx="1.15" ry="1.90" stroke="#1414ff" stroke-width="1.2" fill="none"/>
<path d="M1143.20 702.20L1148.50 711.30V715.00M1157.80 702.20L1163.10 711.30V715.00M1172.90 702.20L1178.20 711.30V715.00" stroke="#1414ff" stroke-width="1.2" fill="none"/>
<text x="1139.90" y="708.20" font-size="4.60" fill="#1414ff" text-anchor="end" font-weight="normal" textLength="8.00" lengthAdjust="spacingAndGlyphs" font-family="Liberation Sans,sans-serif">-Q5</text>
<text x="1149.90" y="700.60" font-size="3.20" fill="#141478" text-anchor="start" font-weight="bold" font-family="Liberation Sans,sans-serif">1</text>
<text x="1149.50" y="715.60" font-size="3.20" fill="#141478" text-anchor="start" font-weight="bold" font-family="Liberation Sans,sans-serif">2</text>
<text x="1164.50" y="700.60" font-size="3.20" fill="#141478" text-anchor="start" font-weight="bold" font-family="Liberation Sans,sans-serif">3</text>
<text x="1164.10" y="715.60" font-size="3.20" fill="#141478" text-anchor="start" font-weight="bold" font-family="Liberation Sans,sans-serif">4</text>
<text x="1179.60" y="700.60" font-size="3.20" fill="#141478" text-anchor="start" font-weight="bold" font-family="Liberation Sans,sans-serif">5</text>
<text x="1179.20" y="715.60" font-size="3.20" fill="#141478" text-anchor="start" font-weight="bold" font-family="Liberation Sans,sans-serif">6</text>
<circle cx="1148.50" cy="804.00" r="1.55" fill="#fff" stroke="#1414ff" stroke-width="1.2"/>
<text x="1150.70" y="805.40" font-size="3.40" fill="#141478" text-anchor="start" font-weight="bold" font-family="Liberation Sans,sans-serif">1</text>
<circle cx="1163.10" cy="804.00" r="1.55" fill="#fff" stroke="#1414ff" stroke-width="1.2"/>
<text x="1165.30" y="805.40" font-size="3.40" fill="#141478" text-anchor="start" font-weight="bold" font-family="Liberation Sans,sans-serif">2</text>
<circle cx="1178.20" cy="804.00" r="1.55" fill="#fff" stroke="#1414ff" stroke-width="1.2"/>
<text x="1180.40" y="805.40" font-size="3.40" fill="#141478" text-anchor="start" font-weight="bold" font-family="Liberation Sans,sans-serif">3</text>
<circle cx="1192.60" cy="804.00" r="1.55" fill="#fff" stroke="#1414ff" stroke-width="1.2"/>
<text x="1194.80" y="805.40" font-size="3.40" fill="#141478" text-anchor="start" font-weight="bold" font-family="Liberation Sans,sans-serif">4</text>
<text x="1144.90" y="805.60" font-size="4.60" fill="#1414ff" text-anchor="end" font-weight="normal" textLength="7.20" lengthAdjust="spacingAndGlyphs" font-family="Liberation Sans,sans-serif">-X1</text>
<path d="M1118.30 826.20H1215.70" stroke="#1414ff" stroke-width="1.4" fill="none"/>
<text x="1118.10" y="825.00" font-size="4.80" fill="#1414ff" text-anchor="end" font-weight="normal" textLength="12.40" lengthAdjust="spacingAndGlyphs" font-family="Liberation Sans,sans-serif">-W71</text>
<text x="1151.10" y="821.00" font-size="2.80" fill="#ff2a0a" text-anchor="start" font-weight="bold" textLength="3.40" lengthAdjust="spacingAndGlyphs" font-family="Liberation Sans,sans-serif">BN</text>
<text x="1151.10" y="824.40" font-size="2.80" fill="#ff2a0a" text-anchor="start" font-weight="bold" textLength="3.20" lengthAdjust="spacingAndGlyphs" font-family="Liberation Sans,sans-serif">1,5</text>
<text x="1165.70" y="821.00" font-size="2.80" fill="#ff2a0a" text-anchor="start" font-weight="bold" textLength="3.40" lengthAdjust="spacingAndGlyphs" font-family="Liberation Sans,sans-serif">BU</text>
<text x="1165.70" y="824.40" font-size="2.80" fill="#ff2a0a" text-anchor="start" font-weight="bold" textLength="3.20" lengthAdjust="spacingAndGlyphs" font-family="Liberation Sans,sans-serif">1,5</text>
<text x="1180.80" y="821.00" font-size="2.80" fill="#ff2a0a" text-anchor="start" font-weight="bold" textLength="3.40" lengthAdjust="spacingAndGlyphs" font-family="Liberation Sans,sans-serif">BK</text>
<text x="1180.80" y="824.40" font-size="2.80" fill="#ff2a0a" text-anchor="start" font-weight="bold" textLength="3.20" lengthAdjust="spacingAndGlyphs" font-family="Liberation Sans,sans-serif">1,5</text>
<text x="1195.20" y="821.00" font-size="2.80" fill="#ff2a0a" text-anchor="start" font-weight="bold" textLength="6.00" lengthAdjust="spacingAndGlyphs" font-family="Liberation Sans,sans-serif">GNYE</text>
<text x="1195.20" y="824.40" font-size="2.80" fill="#ff2a0a" text-anchor="start" font-weight="bold" textLength="3.20" lengthAdjust="spacingAndGlyphs" font-family="Liberation Sans,sans-serif">1,5</text>
<path d="M1146.10 824.00l4.60 4.40M1160.70 824.00l4.60 4.40M1175.80 824.00l4.60 4.40M1190.20 824.00l4.60 4.40" stroke="#ff0d0d" stroke-width="1.1" fill="none"/>
<text x="1126.80" y="841.20" font-size="4.90" fill="#1414ff" text-anchor="end" font-weight="normal" textLength="49.60" lengthAdjust="spacingAndGlyphs" font-family="Liberation Sans,sans-serif">#&lt;DRIVE_POWER&gt;</text>
<text x="1127.30" y="848.40" font-size="4.90" fill="#1414ff" text-anchor="end" font-weight="normal" textLength="11.60" lengthAdjust="spacingAndGlyphs" font-family="Liberation Sans,sans-serif">Lapp</text>
<path d="M1133.50 840.80V848.60M1129.60 845.60Q1130.10 848.60 1133.50 848.60Q1136.90 848.60 1137.40 845.00" stroke="#ff0d0d" stroke-width="1.2" fill="none"/>
<circle cx="1133.50" cy="840.30" r="0.70" fill="none" stroke="#ff0d0d" stroke-width="0.9"/>
<path d="M1059.40 854.70V862.50M1055.50 859.50Q1056.00 862.50 1059.40 862.50Q1062.80 862.50 1063.30 858.90" stroke="#ff0d0d" stroke-width="1.2" fill="none"/>
<circle cx="1059.40" cy="854.20" r="0.70" fill="none" stroke="#ff0d0d" stroke-width="0.9"/>
<circle cx="1163.30" cy="862.90" r="10.90" fill="#fff" stroke="#1414ff" stroke-width="1.3"/>
<path d="M1148.50 848.40V852.60L1154.30 856.40M1163.10 848.40V852.00M1178.20 848.40V852.60L1172.30 856.40M1172.70 870.60L1178.20 875.60" stroke="#1414ff" stroke-width="1.2" fill="none"/>
<text x="1163.10" y="861.60" font-size="6.40" fill="#3c3cff" text-anchor="middle" font-weight="normal" font-family="Liberation Sans,sans-serif">M</text>
<text x="1161.70" y="869.60" font-size="6.40" fill="#3c3cff" text-anchor="middle" font-weight="normal" font-family="Liberation Sans,sans-serif">3~</text>
<text x="1149.30" y="849.60" font-size="3.00" fill="#141478" text-anchor="start" font-weight="bold" font-family="Liberation Sans,sans-serif">U1</text>
<text x="1163.90" y="849.60" font-size="3.00" fill="#141478" text-anchor="start" font-weight="bold" font-family="Liberation Sans,sans-serif">V1</text>
<text x="1179.10" y="849.60" font-size="3.00" fill="#141478" text-anchor="start" font-weight="bold" font-family="Liberation Sans,sans-serif">W1</text>
<text x="1179.90" y="878.20" font-size="3.00" fill="#000" text-anchor="start" font-weight="bold" font-family="Liberation Sans,sans-serif">PE</text>
<text x="1141.10" y="864.60" font-size="4.80" fill="#1414ff" text-anchor="end" font-weight="normal" textLength="8.80" lengthAdjust="spacingAndGlyphs" font-family="Liberation Sans,sans-serif">-M1</text>
<text x="1141.10" y="869.90" font-size="3.20" fill="#000" text-anchor="end" font-weight="bold" textLength="27.40" lengthAdjust="spacingAndGlyphs" font-family="Liberation Sans,sans-serif">Standardmotor</text>
<text x="1188.20" y="518.30" font-size="2.9" font-weight="bold" fill="#ff2a0a" textLength="3.6" lengthAdjust="spacingAndGlyphs" font-family="Liberation Sans,sans-serif">BN</text>
<text x="1188.20" y="521.90" font-size="2.9" font-weight="bold" fill="#ff2a0a" textLength="3.4" lengthAdjust="spacingAndGlyphs" font-family="Liberation Sans,sans-serif">1,5</text>
<text x="1195.20" y="526.30" font-size="2.9" font-weight="bold" fill="#ff2a0a" textLength="3.6" lengthAdjust="spacingAndGlyphs" font-family="Liberation Sans,sans-serif">BU</text>
<text x="1195.20" y="529.90" font-size="2.9" font-weight="bold" fill="#ff2a0a" textLength="3.4" lengthAdjust="spacingAndGlyphs" font-family="Liberation Sans,sans-serif">1,5</text>
<text x="1202.20" y="533.60" font-size="2.9" font-weight="bold" fill="#ff2a0a" textLength="3.6" lengthAdjust="spacingAndGlyphs" font-family="Liberation Sans,sans-serif">BK</text>
<text x="1202.20" y="537.20" font-size="2.9" font-weight="bold" fill="#ff2a0a" textLength="3.4" lengthAdjust="spacingAndGlyphs" font-family="Liberation Sans,sans-serif">1,5</text>
<text x="1217.00" y="548.00" font-size="2.9" font-weight="bold" fill="#ff2a0a" textLength="6.2" lengthAdjust="spacingAndGlyphs" font-family="Liberation Sans,sans-serif">GNYE</text>
<text x="1217.00" y="551.60" font-size="2.9" font-weight="bold" fill="#ff2a0a" textLength="3.4" lengthAdjust="spacingAndGlyphs" font-family="Liberation Sans,sans-serif">1,5</text>
<path d="M1183.20 520.60L1187.90 525.50M1189.80 527.70L1195.30 532.80M1198.00 535.10L1202.70 539.80M1213.00 550.30L1217.70 554.60" stroke="#ff0d0d" stroke-width="1.1" fill="none"/>
</svg>
<div class="a" style="left:522.40px;top:43.80px;width:20.60px;height:378.40px;background:#f0f0f0;"></div>
<div class="a" style="left:522.90px;top:71.30px;width:18.60px;height:231.40px;background:#cdcdcd;"></div>
<div class="a" style="left:13.80px;top:422.40px;width:508.60px;height:22.20px;background:#f0f0f0;"></div>
<div class="a" style="left:34.70px;top:422.70px;width:306.00px;height:19.50px;background:#cdcdcd;"></div>
<svg style="left:0;top:0" width="553.7" height="453.3">
<path d="M527.60 55.60l4.8 -5.2 4.8 5.2" stroke="#3c3c3c" stroke-width="2.1" fill="none"/>
<path d="M527.60 408.00l4.8 5.2 4.8 -5.2" stroke="#3c3c3c" stroke-width="2.1" fill="none"/>
<path d="M24.40 427.70l-5.2 4.8 5.2 4.8" stroke="#3c3c3c" stroke-width="2.1" fill="none"/>
<path d="M508.00 427.80l5.2 4.8 -5.2 4.8" stroke="#3c3c3c" stroke-width="2.1" fill="none"/>
<rect x="537.0" y="430.6" width="2.7" height="2.7" fill="#c3c3c3"/><rect x="533.1" y="434.4" width="2.7" height="2.7" fill="#c3c3c3"/><rect x="537.0" y="434.4" width="2.7" height="2.7" fill="#c3c3c3"/><rect x="529.2" y="438.2" width="2.7" height="2.7" fill="#c3c3c3"/><rect x="533.1" y="438.2" width="2.7" height="2.7" fill="#c3c3c3"/><rect x="537.0" y="438.2" width="2.7" height="2.7" fill="#c3c3c3"/>
</svg>
</div>
<div class="a" style="left:415.60px;top:920.80px;width:552.40px;height:1.10px;background:#35c4ee;"></div>
<div class="a" style="left:967.20px;top:470.00px;width:1.00px;height:451.60px;background:#6fd0f0;"></div>
<div class="a" style="left:968.00px;top:14.00px;width:1.50px;height:908.00px;background:#333;"></div>
<div class="a" style="left:413.40px;top:468.20px;width:1109.00px;height:1.50px;background:#222;"></div>
<!-- document tabs -->
<svg style="left:414.00px;top:930.8px" width="93.4" height="26"><path d="M0.6 2.4V20.4Q0.6 22.6 2.8 22.6" fill="none" stroke="#fff" stroke-width="1.2"/><path d="M2.2 22.7H88.5Q90.7 22.7 90.7 20.4V2.2" fill="none" stroke="#000" stroke-width="1.5"/></svg>
<svg style="left:417.60px;top:935.20px" width="14" height="16" viewBox="0 0 14 16"><path d="M0.8 0.8H7.6L12.2 5.2V14.8H0.8z" fill="#eceffa" stroke="#b9bcc8" stroke-width="0.9"/><path d="M7.6 0.8V5.2H12.2" fill="#fff" stroke="#b9bcc8" stroke-width="0.8"/></svg>
<span id="t52" class="t" style="left:437.80px;top:936.85px;font-size:11.40px;line-height:11.40px;color:#222;font-family:'Liberation Sans', sans-serif;letter-spacing:0.088px;font-weight:bold;">==</span>
<span id="t53" class="t" style="left:452.20px;top:935.89px;font-size:13.60px;line-height:13.60px;color:#000;font-family:'Liberation Sans', sans-serif;letter-spacing:0.345px;">PART...</span>
<svg style="left:505.80px;top:930.8px" width="94.8" height="26"><path d="M0.6 2.4V20.4Q0.6 22.6 2.8 22.6" fill="none" stroke="#fff" stroke-width="1.2"/><path d="M2.2 22.7H89.9" fill="none" stroke="#000" stroke-width="1.5"/></svg>
<svg style="left:509.40px;top:935.20px" width="14" height="16" viewBox="0 0 14 16"><path d="M0.8 0.8H7.6L12.2 5.2V14.8H0.8z" fill="#eceffa" stroke="#b9bcc8" stroke-width="0.9"/><path d="M7.6 0.8V5.2H12.2" fill="#fff" stroke="#b9bcc8" stroke-width="0.8"/></svg>
<span id="t54" class="t" style="left:530.40px;top:936.85px;font-size:11.40px;line-height:11.40px;color:#222;font-family:'Liberation Sans', sans-serif;letter-spacing:0.088px;font-weight:bold;">==</span>
<span id="t55" class="t" style="left:544.80px;top:935.89px;font-size:13.60px;line-height:13.60px;color:#000;font-family:'Liberation Sans', sans-serif;letter-spacing:0.545px;">PART...</span>
<svg style="left:692.40px;top:930.8px" width="92.6" height="26"><path d="M0.6 2.4V20.4Q0.6 22.6 2.8 22.6" fill="none" stroke="#fff" stroke-width="1.2"/><path d="M2.2 22.7H87.7Q89.9 22.7 89.9 20.4V2.2" fill="none" stroke="#000" stroke-width="1.5"/></svg>
<svg style="left:696.00px;top:935.20px" width="14" height="16" viewBox="0 0 14 16"><path d="M0.8 0.8H7.6L12.2 5.2V14.8H0.8z" fill="#eceffa" stroke="#b9bcc8" stroke-width="0.9"/><path d="M7.6 0.8V5.2H12.2" fill="#fff" stroke="#b9bcc8" stroke-width="0.8"/></svg>
<span id="t56" class="t" style="left:716.30px;top:936.85px;font-size:11.40px;line-height:11.40px;color:#222;font-family:'Liberation Sans', sans-serif;letter-spacing:0.088px;font-weight:bold;">==</span>
<span id="t57" class="t" style="left:730.70px;top:935.89px;font-size:13.60px;line-height:13.60px;color:#000;font-family:'Liberation Sans', sans-serif;letter-spacing:0.345px;">PART...</span>
<div class="a" style="left:597.90px;top:930.20px;width:93.00px;height:2.40px;background:#f0f0f0;"></div>
<svg style="left:597.30px;top:930px" width="96.6" height="28"><path d="M0.6 0V22.6Q0.6 24.8 2.8 24.8" fill="none" stroke="#fff" stroke-width="1.2"/><path d="M2.2 24.9H91.7Q93.9 24.9 93.9 22.6V1.4" fill="none" stroke="#000" stroke-width="1.5"/></svg>
<svg style="left:600.90px;top:936.60px" width="14" height="16" viewBox="0 0 14 16"><path d="M0.8 0.8H7.6L12.2 5.2V14.8H0.8z" fill="#eceffa" stroke="#b9bcc8" stroke-width="0.9"/><path d="M7.6 0.8V5.2H12.2" fill="#fff" stroke="#b9bcc8" stroke-width="0.8"/></svg>
<span id="t58" class="t" style="left:619.50px;top:938.45px;font-size:11.40px;line-height:11.40px;color:#222;font-family:'Liberation Sans', sans-serif;letter-spacing:0.088px;font-weight:bold;">==</span>
<span id="t59" class="t" style="left:633.90px;top:937.49px;font-size:13.60px;line-height:13.60px;color:#000;font-family:'Liberation Sans', sans-serif;letter-spacing:0.128px;">PARTS...</span>
</body></html>
